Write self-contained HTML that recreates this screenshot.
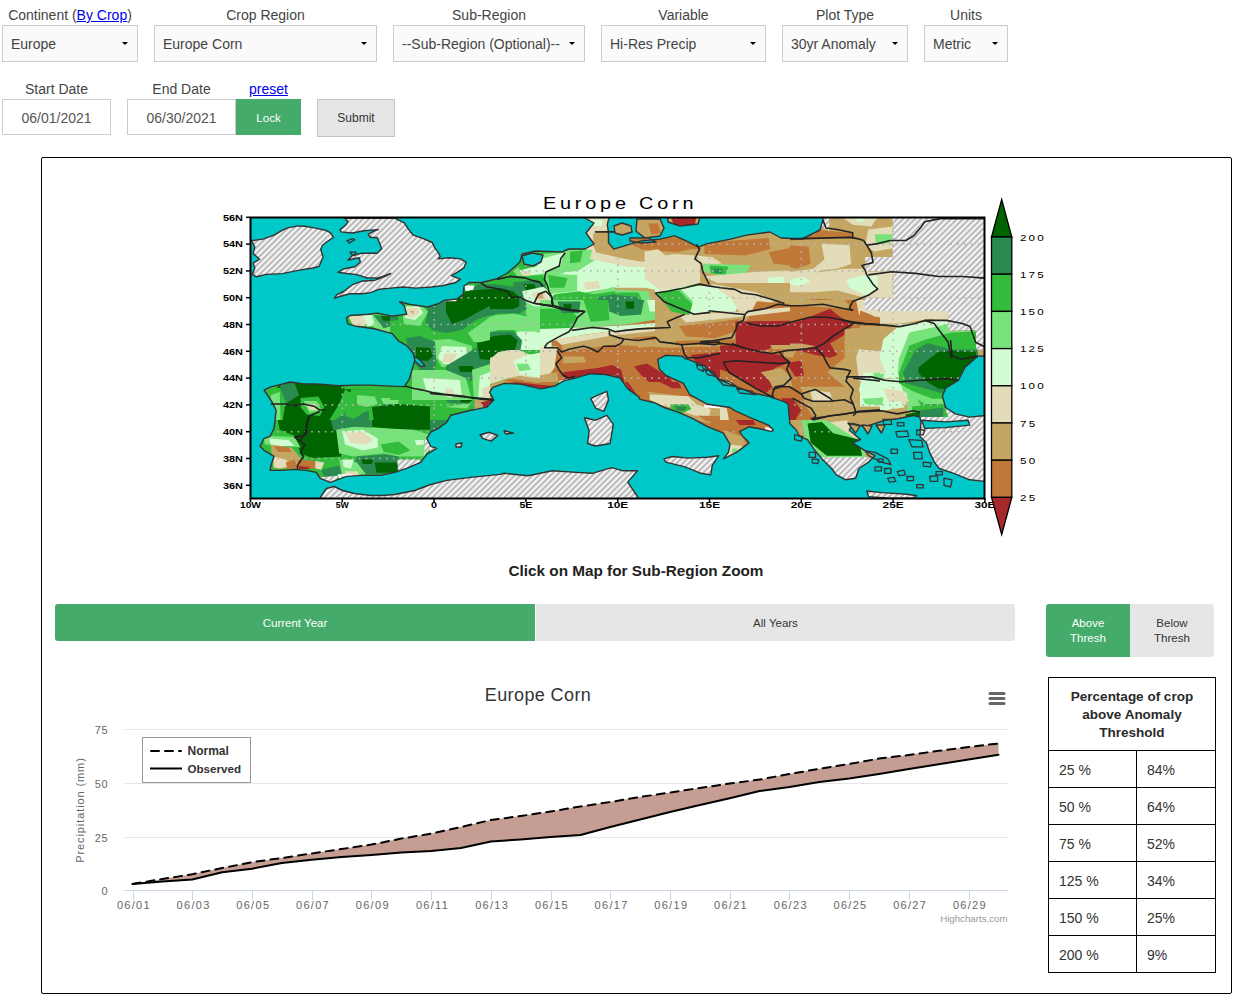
<!DOCTYPE html>
<html><head><meta charset="utf-8"><style>
html,body{margin:0;padding:0;background:#fff;}
body{width:1245px;height:1001px;position:relative;overflow:hidden;font-family:"Liberation Sans",sans-serif;color:#333;}
.a{position:absolute;}
.lbl{position:absolute;font-size:14px;line-height:16px;color:#444;text-align:center;white-space:nowrap;}
.sel{position:absolute;top:25px;height:35px;border:1px solid #ccc;background:#fafafa;}
.sel span{position:absolute;left:8px;top:10px;font-size:14px;line-height:16px;color:#444;white-space:nowrap;}
.car{position:absolute;top:16px;width:0;height:0;border-left:3px solid transparent;border-right:3px solid transparent;border-top:3px solid #000;}
.inp{position:absolute;top:99px;height:34px;border:1px solid #ccc;background:#fff;}
.inp span{position:absolute;left:0;right:0;top:10px;text-align:center;font-size:14px;line-height:16px;color:#555;}
a{color:#00e;text-decoration:underline;}
.btn{text-align:center;font-size:12px;}
.g{background:#44ab6a;color:#fff;}
.tab{text-align:center;font-size:11.5px;line-height:39px;}
.tab2{text-align:center;font-size:11.5px;line-height:15px;box-sizing:border-box;padding-top:12px;}
.td{font-size:14px;line-height:16px;color:#333;white-space:nowrap;}
</style></head><body>
<div class="lbl" style="left:-18px;width:176px;top:7px">Continent (<a>By Crop</a>)</div>
<div class="sel" style="left:2px;width:134px"><span>Europe</span><i class="car" style="left:119px"></i></div>
<div class="lbl" style="left:134px;width:263px;top:7px">Crop Region</div>
<div class="sel" style="left:154px;width:221px"><span>Europe Corn</span><i class="car" style="left:206px"></i></div>
<div class="lbl" style="left:373px;width:232px;top:7px">Sub-Region</div>
<div class="sel" style="left:393px;width:190px"><span>--Sub-Region (Optional)--</span><i class="car" style="left:175px"></i></div>
<div class="lbl" style="left:581px;width:205px;top:7px">Variable</div>
<div class="sel" style="left:601px;width:163px"><span>Hi-Res Precip</span><i class="car" style="left:148px"></i></div>
<div class="lbl" style="left:762px;width:166px;top:7px">Plot Type</div>
<div class="sel" style="left:782px;width:124px"><span>30yr Anomaly</span><i class="car" style="left:109px"></i></div>
<div class="lbl" style="left:904px;width:124px;top:7px">Units</div>
<div class="sel" style="left:924px;width:82px"><span>Metric</span><i class="car" style="left:67px"></i></div>
<div class="lbl" style="left:2px;width:109px;top:81px">Start Date</div>
<div class="lbl" style="left:127px;width:109px;top:81px">End Date</div>
<div class="lbl" style="left:236px;width:65px;top:81px"><a>preset</a></div>
<div class="inp" style="left:2px;width:107px"><span>06/01/2021</span></div>
<div class="inp" style="left:127px;width:107px"><span>06/30/2021</span></div>
<div class="a btn g" style="left:236px;top:99px;width:65px;height:36px;line-height:38px;font-size:11.5px">Lock</div>
<div class="a btn" style="left:317px;top:99px;width:76px;height:36px;line-height:36px;border:1px solid #c4c4c4;background:#e6e6e6;color:#333">Submit</div>
<div class="a" style="left:41px;top:157px;width:1189px;height:835px;border:1px solid #000;border-radius:2px"></div>
<div class="a" style="left:436px;width:400px;top:562px;text-align:center;font-size:15.3px;line-height:18px;font-weight:bold;color:#222">Click on Map for Sub-Region Zoom</div>
<div class="a tab g" style="left:55px;top:604px;width:480px;height:37px;border-radius:3px 0 0 3px">Current Year</div>
<div class="a tab" style="left:536px;top:604px;width:479px;height:37px;border-radius:0 3px 3px 0;background:#e6e6e6;color:#333">All Years</div>
<div class="a tab2 g" style="left:1046px;top:604px;width:84px;height:53px;border-radius:3px 0 0 3px">Above<br>Thresh</div>
<div class="a tab2" style="left:1130px;top:604px;width:84px;height:53px;border-radius:0 3px 3px 0;background:#e6e6e6;color:#333">Below<br>Thresh</div>
<div class="a" style="left:1048px;top:677px;width:166px;height:294px;border:1px solid #000"></div>
<div class="a" style="left:1049px;top:688px;width:166px;text-align:center;font-size:13.5px;line-height:18px;font-weight:bold;color:#2a2a2a">Percentage of crop<br>above Anomaly<br>Threshold</div>
<div class="a" style="left:1048px;top:750px;width:168px;height:1px;background:#000"></div>
<div class="a td" style="left:1059px;top:762px">25 %</div>
<div class="a td" style="left:1147px;top:762px">84%</div>
<div class="a" style="left:1048px;top:787px;width:168px;height:1px;background:#000"></div>
<div class="a td" style="left:1059px;top:799px">50 %</div>
<div class="a td" style="left:1147px;top:799px">64%</div>
<div class="a" style="left:1048px;top:824px;width:168px;height:1px;background:#000"></div>
<div class="a td" style="left:1059px;top:836px">75 %</div>
<div class="a td" style="left:1147px;top:836px">52%</div>
<div class="a" style="left:1048px;top:861px;width:168px;height:1px;background:#000"></div>
<div class="a td" style="left:1059px;top:873px">125 %</div>
<div class="a td" style="left:1147px;top:873px">34%</div>
<div class="a" style="left:1048px;top:898px;width:168px;height:1px;background:#000"></div>
<div class="a td" style="left:1059px;top:910px">150 %</div>
<div class="a td" style="left:1147px;top:910px">25%</div>
<div class="a" style="left:1048px;top:935px;width:168px;height:1px;background:#000"></div>
<div class="a td" style="left:1059px;top:947px">200 %</div>
<div class="a td" style="left:1147px;top:947px">9%</div>
<div class="a" style="left:1136px;top:750px;width:1px;height:222px;background:#000"></div>
<svg class="a" style="left:0;top:0" width="1245" height="560" viewBox="0 0 1245 560">
<defs><pattern id="hat" patternUnits="userSpaceOnUse" width="6" height="6"><rect width="6" height="6" fill="#f3f3f3"/><path d="M-1,7 L7,-1 M-4,4 L4,-4 M2,10 L10,2" stroke="#bbb" stroke-width="2"/></pattern>
<clipPath id="mc"><rect x="250" y="217" width="735" height="282"/></clipPath><clipPath id="rc0"><rect x="430" y="217" width="185" height="133"/></clipPath><clipPath id="rc1"><rect x="250" y="300" width="180" height="120"/></clipPath><clipPath id="rc2"><rect x="250" y="420" width="185" height="80"/></clipPath><clipPath id="rc3"><rect x="430" y="370" width="70" height="130"/></clipPath><clipPath id="rc4"><rect x="430" y="350" width="185" height="70"/></clipPath><clipPath id="rc5"><rect x="615" y="347" width="25" height="73"/></clipPath><clipPath id="rc6"><rect x="615" y="217" width="175" height="130"/></clipPath><clipPath id="rc7"><rect x="790" y="217" width="195" height="141"/></clipPath><clipPath id="rc8"><rect x="640" y="347" width="150" height="153"/></clipPath><clipPath id="rc9"><rect x="790" y="347" width="195" height="153"/></clipPath><clipPath id="rc10"><rect x="540" y="300" width="180" height="82"/></clipPath><clipPath id="rc11"><rect x="720" y="300" width="160" height="120"/></clipPath><clipPath id="rc12"><rect x="860" y="311" width="88" height="20"/></clipPath><clipPath id="rc13"><rect x="860" y="331" width="116" height="25"/></clipPath><clipPath id="rc14"><rect x="860" y="356" width="125" height="74"/></clipPath><clipPath id="rc15"><rect x="390" y="300" width="100" height="100"/></clipPath><clipPath id="rc16"><rect x="655" y="283" width="135" height="62"/></clipPath><clipPath id="rc17"><rect x="530" y="250" width="90" height="50"/></clipPath><clipPath id="rc18"><rect x="540" y="230" width="160" height="70"/></clipPath></defs>
<g clip-path="url(#mc)">
<rect x="250" y="217" width="735" height="282" fill="url(#hat)"/>
<clipPath id="ext"><polygon points="250,217 985,217 985,499 640,499 640,462 480,466 420,470 380,478 346,479 330,484 250,484"/></clipPath>
<g clip-path="url(#ext)">
<g clip-path="url(#rc0)">
<rect x="430" y="217" width="185" height="133" fill="#33bb3b"/>
<polygon points="578.6,217.0 615.0,217.0 615.0,252.7 586.0,249.7" fill="#e2dcb8" />
<polygon points="596.4,231.9 615.0,230.4 615.0,246.7 597.9,245.2" fill="#c5a562" />
<polygon points="590.5,220.0 602.4,220.0 602.4,225.9 592.0,225.9" fill="#d2fcd2" />
<polygon points="566.7,252.7 615.0,252.7 615.0,288.3 593.4,291.3 563.7,297.2 551.8,294.3 548.9,276.4 560.8,266.0" fill="#d2fcd2" />
<polygon points="592.0,246.7 615.0,245.2 615.0,261.6 594.9,260.1" fill="#e2dcb8" />
<polygon points="599.4,231.9 615.0,228.9 615.0,246.7 600.9,246.7" fill="#c5a562" />
<polygon points="583.0,282.4 597.9,280.9 600.9,288.3 586.0,289.8" fill="#e2dcb8" />
<polygon points="525.1,303.2 557.8,300.2 615.0,286.8 615.0,327.0 578.6,329.9 548.9,332.9 528.1,329.9" fill="#77e37a" />
<polygon points="554.8,294.3 578.6,291.3 593.4,294.3 615.0,291.3 615.0,321.0 593.4,324.0 572.6,321.0 554.8,312.1" fill="#33bb3b" />
<polygon points="596.4,297.2 615.0,294.3 615.0,309.1 600.9,306.2" fill="#2b8a50" />
<polygon points="560.8,300.2 577.1,300.2 578.6,312.1 566.7,316.6 560.8,309.1" fill="#2b8a50" />
<polygon points="563.7,304.7 571.2,304.7 571.2,309.1 565.2,309.1" fill="#006400" />
<polygon points="513.2,270.5 542.9,254.1 566.7,251.2 563.7,273.5 542.9,276.4 519.2,279.4" fill="#77e37a" />
<polygon points="519.2,258.6 534.0,255.6 537.0,267.5 519.2,270.5" fill="#33bb3b" />
<polygon points="519.2,270.5 537.0,266.0 542.9,258.6 563.7,252.7 560.8,266.0 542.9,273.5 525.1,276.4" fill="#d2fcd2" />
<polygon points="520.6,272.0 531.0,271.2 531.0,274.9 522.1,275.7" fill="#e2dcb8" />
<polygon points="480.5,280.9 513.2,276.4 542.9,274.9 548.9,282.4 525.1,297.2 501.3,294.3 483.5,288.3" fill="#33bb3b" />
<polygon points="430.0,309.1 437.4,300.2 464.2,288.3 480.5,283.9 493.9,283.9 513.2,286.8 525.1,294.3 526.6,309.1 519.2,313.6 496.9,313.6 474.6,321.0 459.7,328.4 444.9,331.4 430.0,329.9" fill="#2b8a50" />
<polygon points="437.4,304.7 456.7,300.2 465.7,291.3 480.5,289.8 501.3,288.3 513.2,291.3 519.2,297.2 519.2,306.2 513.2,309.1 492.4,309.1 480.5,312.1 467.1,321.0 456.7,324.0 444.9,321.0 438.9,312.1" fill="#006400" />
<polygon points="513.2,282.4 537.0,279.4 545.9,285.4 542.9,291.3 525.1,294.3 513.2,291.3" fill="#2b8a50" />
<polygon points="523.6,283.9 534.0,283.9 537.0,289.8 526.6,291.3" fill="#006400" />
<polygon points="522.1,291.3 542.9,286.8 553.3,294.3 551.8,306.2 534.0,306.2 525.1,301.7" fill="#d2fcd2" />
<polygon points="531.0,292.8 544.4,291.3 548.9,300.2 537.0,303.2" fill="#e2dcb8" />
<polygon points="537.0,293.5 542.9,293.5 542.9,298.7 538.5,298.7" fill="#c5a562" />
<polygon points="430.0,329.9 459.7,329.9 474.6,321.0 496.9,315.1 513.2,313.6 534.0,318.0 548.9,329.9 534.0,335.9 513.2,329.9 498.4,329.9 474.6,338.8 447.8,338.8 430.0,335.9" fill="#77e37a" />
<polygon points="516.2,331.4 534.0,331.4 551.8,335.9 554.8,350.7 542.9,358.0 522.1,358.0 519.2,347.8" fill="#d2fcd2" />
<polygon points="473.1,338.8 492.4,331.4 513.2,331.4 522.1,340.3 519.2,358.0 471.6,358.0" fill="#2b8a50" />
<polygon points="477.5,341.8 493.9,335.9 510.2,334.4 517.7,340.3 514.7,350.7 501.3,358.0 479.0,358.0 474.6,350.7" fill="#006400" />
<polygon points="438.9,341.8 467.1,340.3 470.1,358.0 438.9,358.0" fill="#77e37a" />
<polygon points="444.9,346.3 459.7,344.8 462.7,358.0 444.9,358.0" fill="#d2fcd2" />
<polygon points="548.9,344.8 563.7,343.3 560.8,358.0 545.9,358.0" fill="#e2dcb8" />
<polygon points="560.8,329.9 615.0,327.0 615.0,335.9 563.7,343.3 551.8,341.8" fill="#e2dcb8" />
<polygon points="560.8,338.8 615.0,335.9 615.0,346.3 563.7,350.7" fill="#c5a562" />
<polygon points="557.8,347.8 615.0,344.8 615.0,358.0 559.3,358.0" fill="#c07838" />
<polygon points="464.2,285.4 474.6,285.4 473.1,289.8 465.7,291.3" fill="#ffffff" />
<polygon points="435.9,301.7 456.7,300.2 455.3,304.7 437.4,306.2" fill="#ffffff" />
</g>
<g clip-path="url(#rc1)">
<rect x="250" y="300" width="180" height="120" fill="#33bb3b"/>
<polygon points="348.1,316.3 365.9,314.9 368.9,325.3 354.0,326.7" fill="#e2dcb8" />
<polygon points="371.8,313.4 383.7,316.3 398.6,329.7 383.7,334.2 373.3,326.7" fill="#77e37a" />
<polygon points="373.3,314.9 397.1,316.3 398.6,323.8 383.7,328.2" fill="#2b8a50" />
<polygon points="380.8,316.3 398.6,316.3 397.1,320.8 383.7,320.8" fill="#006400" />
<polygon points="362.9,314.9 371.8,314.9 374.8,325.3 367.4,326.7" fill="#d2fcd2" />
<polygon points="401.6,303.0 422.4,308.9 413.4,322.3 404.5,317.8" fill="#77e37a" />
<polygon points="404.5,304.5 422.4,307.4 423.8,313.4 410.5,319.3" fill="#d2fcd2" />
<polygon points="406.0,305.9 417.9,307.4 419.4,317.8 410.5,317.8" fill="#e2dcb8" />
<polygon points="406.0,338.6 428.3,334.2 435.0,344.6 435.0,359.4 420.9,359.4 410.5,349.0" fill="#2b8a50" />
<polygon points="413.4,347.5 432.8,347.5 432.8,359.4 416.4,360.9" fill="#006400" />
<polygon points="412.0,369.8 435.0,366.9 435.0,395.1 413.4,392.1" fill="#77e37a" />
<polygon points="414.9,375.8 435.0,372.8 435.0,392.1 422.4,389.2" fill="#d2fcd2" />
<polygon points="279.7,383.2 339.2,383.2 345.1,389.2 339.2,404.0 327.3,423.3 339.2,441.0 264.9,441.0 272.3,395.1" fill="#006400" />
<polygon points="345.1,389.2 435.0,390.6 435.0,395.1 354.0,395.1" fill="#006400" />
<polygon points="281.2,383.2 294.6,383.2 299.0,395.1 285.7,404.0 278.2,395.1" fill="#2b8a50" />
<polygon points="264.9,389.2 279.7,387.7 285.7,401.0 279.7,441.0 267.8,441.0 270.8,404.0" fill="#33bb3b" />
<polygon points="270.8,395.1 279.7,392.1 281.2,441.0 272.3,441.0" fill="#77e37a" />
<polygon points="300.5,398.1 318.4,396.6 324.3,407.0 319.8,415.9 306.5,414.4 300.5,407.0" fill="#33bb3b" />
<polygon points="303.5,401.0 316.9,401.0 321.3,410.0 309.4,412.9" fill="#77e37a" />
<polygon points="306.5,404.0 315.4,404.0 316.9,410.0 309.4,410.0" fill="#e2dcb8" />
<polygon points="330.2,423.3 345.1,412.9 357.0,401.0 362.9,389.2 383.7,389.2 398.6,389.2 435.0,392.1 435.0,404.0 398.6,407.0 368.9,404.0 368.9,418.9 354.0,429.3 333.2,429.3" fill="#2b8a50" />
<polygon points="351.0,389.2 398.6,389.2 435.0,395.1 435.0,407.0 383.7,404.0 362.9,412.9 354.0,418.9 345.1,415.9" fill="#33bb3b" />
<polygon points="357.0,395.1 374.8,396.6 377.8,404.0 365.9,407.0 357.0,404.0" fill="#77e37a" />
<polygon points="380.8,398.1 398.6,398.1 398.6,404.0 383.7,404.0" fill="#77e37a" />
<polygon points="371.8,407.0 398.6,404.0 435.0,407.0 435.0,427.8 398.6,429.3 374.8,427.8" fill="#006400" />
<polygon points="339.2,429.3 368.9,427.8 435.0,430.8 435.0,441.0 339.2,441.0" fill="#33bb3b" />
<polygon points="346.6,432.2 383.7,430.8 398.6,441.0 345.1,441.0" fill="#77e37a" />
<polygon points="346.6,433.7 365.9,433.7 368.9,441.0 345.1,441.0" fill="#e2dcb8" />
</g>
<g clip-path="url(#rc2)">
<rect x="250" y="420" width="185" height="80" fill="#33bb3b"/>
<polygon points="279.7,405.9 306.5,403.0 333.2,411.9 342.1,420.8 336.2,429.7 339.2,438.6 342.1,456.5 312.4,457.9 300.5,453.5 294.6,435.7 279.7,429.7 276.7,414.9" fill="#006400" />
<polygon points="371.8,408.9 398.6,405.9 435.0,408.9 435.0,429.7 398.6,429.7 371.8,426.7" fill="#006400" />
<polygon points="357.0,456.5 398.6,453.5 398.6,474.3 365.9,474.3 354.0,465.4" fill="#2b8a50" />
<polygon points="374.8,462.4 397.1,462.4 397.1,472.8 376.3,472.8" fill="#006400" />
<polygon points="361.4,459.4 373.3,459.4 371.8,463.9 362.9,463.9" fill="#006400" />
<polygon points="330.2,417.8 354.0,411.9 368.9,408.9 371.8,429.7 354.0,429.7 342.1,432.7 333.2,429.7" fill="#2b8a50" />
<polygon points="321.3,469.8 339.2,465.4 342.1,474.3 324.3,477.3" fill="#2b8a50" />
<polygon points="336.2,429.7 354.0,426.7 383.7,428.2 413.4,429.7 428.3,434.2 425.3,456.5 398.6,456.5 383.7,453.5 354.0,456.5 339.2,453.5" fill="#77e37a" />
<polygon points="380.8,444.6 398.6,441.6 410.5,450.5 398.6,455.0 383.7,452.0" fill="#33bb3b" />
<polygon points="342.1,431.2 362.9,429.7 377.8,438.6 377.8,447.5 362.9,450.5 345.1,444.6" fill="#d2fcd2" />
<polygon points="345.1,432.7 362.9,431.9 373.3,440.1 365.9,444.6 351.0,443.1" fill="#e2dcb8" />
<polygon points="410.5,438.6 425.3,435.7 425.3,447.5 413.4,449.0" fill="#77e37a" />
<polygon points="414.9,440.1 423.8,440.1 423.8,444.6 416.4,445.3" fill="#d2fcd2" />
<polygon points="263.4,435.7 294.6,437.1 300.5,447.5 273.8,444.6 264.9,444.6" fill="#77e37a" />
<polygon points="269.3,438.6 288.6,440.1 294.6,446.1 270.8,446.1" fill="#d2fcd2" />
<polygon points="270.8,444.6 291.6,447.5 302.0,459.4 299.0,468.4 273.8,468.4 272.3,459.4" fill="#c5a562" />
<polygon points="273.8,456.5 285.7,459.4 291.6,465.4 279.7,468.4 273.8,466.9" fill="#e2dcb8" />
<polygon points="273.8,446.1 288.6,447.5 291.6,452.0 278.2,452.0" fill="#c07838" />
<polygon points="285.7,462.4 294.6,459.4 297.5,468.4 287.1,468.4" fill="#c07838" />
<polygon points="297.5,459.4 315.4,460.9 318.4,468.4 297.5,468.4" fill="#c07838" />
<polygon points="299.0,466.1 309.4,466.9 309.4,469.1 299.0,469.1" fill="#a6282b" />
<polygon points="315.4,460.9 324.3,462.4 321.3,469.8 315.4,468.4" fill="#e2dcb8" />
<polygon points="339.2,459.4 357.0,462.4 365.9,474.3 342.1,475.8" fill="#77e37a" />
<polygon points="342.1,459.4 354.0,459.4 351.0,468.4 343.6,466.9" fill="#d2fcd2" />
<polygon points="345.1,471.3 357.0,471.3 360.0,475.8 345.1,476.5" fill="#e2dcb8" />
<polygon points="337.7,474.3 352.5,474.3 351.0,477.3 339.2,478.8" fill="#ffffff" />
<polygon points="397.1,459.4 419.4,459.4 420.9,462.4 398.6,471.3" fill="url(#hat)" />
<polygon points="319.8,477.3 339.2,475.8 333.2,483.2 324.3,483.2" fill="url(#hat)" />
<polygon points="425.3,438.6 432.8,444.6 429.8,449.0 423.8,455.0" fill="url(#hat)" />
</g>
<g clip-path="url(#rc3)">
<rect x="430" y="370" width="70" height="130" fill="#33bb3b"/>
<polygon points="410.6,370.0 500.0,370.0 500.0,390.1 470.9,394.1 450.8,406.1 430.7,402.1" fill="#77e37a" />
<polygon points="426.7,378.0 470.9,378.0 470.9,392.1 438.8,392.1" fill="#d2fcd2" />
<polygon points="416.7,388.1 438.8,390.1 440.8,402.1 426.7,404.1 414.7,398.1" fill="#006400" />
<polygon points="430.7,410.2 448.8,414.2 446.8,426.2 434.7,428.2" fill="#006400" />
<polygon points="422.7,406.1 450.8,410.2 450.8,430.2 430.7,434.3" fill="#2b8a50" />
<polygon points="458.8,392.1 494.0,390.1 494.0,404.1 470.9,414.2 458.8,410.2" fill="#e2dcb8" />
<polygon points="462.9,396.1 494.0,394.1 489.0,408.2 470.9,412.2" fill="#c5a562" />
<polygon points="470.9,398.1 494.0,397.1 489.0,408.2 472.9,410.2" fill="#c07838" />
<polygon points="482.9,399.1 494.0,398.1 491.0,407.1 484.9,408.2" fill="#a6282b" />
<polygon points="434.7,392.1 470.9,396.1 466.9,414.2 438.8,416.2" fill="#77e37a" />
<polygon points="414.7,392.1 438.8,396.1 434.7,404.1 414.7,402.1" fill="#006400" />
<polygon points="450.8,410.2 494.0,396.1 494.0,410.2 470.9,420.2 450.8,420.2" fill="#e2dcb8" />
<polygon points="462.9,408.2 491.0,398.1 489.0,412.2 466.9,418.2" fill="#c5a562" />
<polygon points="474.9,406.1 493.0,400.1 491.0,408.2 476.9,414.2" fill="#c07838" />
<polygon points="482.9,402.1 494.0,401.1 491.0,408.2 484.9,409.2" fill="#a6282b" />
<polygon points="450.8,417.2 470.9,415.2 468.9,420.2 450.8,421.2" fill="#ffffff" />
<polygon points="396.6,458.4 420.7,458.4 422.7,474.4 396.6,474.4" fill="url(#hat)" />
<polygon points="424.7,436.3 436.7,436.3 436.7,454.3 424.7,456.3" fill="url(#hat)" />
</g>
<g clip-path="url(#rc4)">
<rect x="430" y="350" width="185" height="70" fill="#33bb3b"/>
<polygon points="430.0,340.0 534.0,340.0 534.0,345.9 522.1,351.9 498.4,362.3 486.5,378.6 471.6,383.1 449.3,384.6 430.0,384.6" fill="#77e37a" />
<polygon points="430.0,354.9 444.9,353.4 447.8,377.1 474.6,375.7 489.4,360.8 504.3,354.9 519.2,345.9 522.1,340.0 534.0,340.0 534.0,345.9 522.1,351.9 498.4,362.3 486.5,378.6 471.6,383.1 449.3,384.6 430.0,384.6" fill="#2b8a50" />
<polygon points="430.0,359.3 443.4,357.8 444.9,378.6 430.0,380.1" fill="#33bb3b" />
<polygon points="434.5,345.9 468.6,344.5 477.5,354.9 459.7,368.2 435.9,365.3" fill="#77e37a" />
<polygon points="438.9,348.9 462.7,348.9 468.6,356.3 456.7,363.8 441.9,360.8" fill="#d2fcd2" />
<polygon points="446.3,353.4 456.7,353.4 452.3,360.8 446.3,359.3" fill="#e2dcb8" />
<polygon points="479.0,348.9 492.4,343.0 516.2,340.0 514.7,347.4 495.4,356.3 483.5,359.3" fill="#006400" />
<polygon points="459.7,366.7 471.6,366.7 470.1,371.2 462.7,371.2" fill="#006400" />
<polygon points="486.5,362.3 498.4,351.9 516.2,348.9 531.0,354.9 542.9,363.8 542.9,374.2 551.8,381.6 522.1,378.6 507.3,378.6 493.9,383.1 480.5,387.5" fill="#e2dcb8" />
<polygon points="513.2,360.8 528.1,354.9 542.9,351.9 557.8,340.0 557.8,348.9 548.9,362.3 548.9,375.7 537.0,377.1 519.2,374.2" fill="#d2fcd2" />
<polygon points="516.2,363.8 528.1,363.8 531.0,369.7 519.2,371.2" fill="#77e37a" />
<polygon points="480.5,387.5 495.4,383.1 507.3,378.6 519.2,375.7 540.0,378.6 554.8,377.1 554.8,384.6 534.0,384.6 513.2,383.1 489.4,390.5 479.0,402.4" fill="#c5a562" />
<polygon points="504.3,380.1 513.2,378.6 537.0,383.1 556.3,380.1 554.8,386.1 542.9,387.5 513.2,384.6" fill="#c07838" />
<polygon points="511.7,381.6 537.0,384.6 553.3,386.1 542.9,388.3 519.2,385.3" fill="#a6282b" />
<polygon points="560.8,340.0 615.0,340.0 615.0,343.0 563.7,345.9" fill="#e2dcb8" />
<polygon points="557.8,345.9 578.6,343.0 615.0,340.0 615.0,348.9 563.7,354.9" fill="#c5a562" />
<polygon points="545.9,365.3 560.8,353.4 615.0,348.9 615.0,369.7 578.6,377.1 557.8,377.1 551.8,374.2" fill="#c07838" />
<polygon points="559.3,356.3 578.6,354.9 593.4,360.8 572.6,365.3 560.8,363.8" fill="#c5a562" />
<polygon points="542.9,366.7 557.8,357.8 560.8,377.1 548.9,375.7" fill="#c5a562" />
<polygon points="563.7,374.2 593.4,369.7 615.0,363.8 615.0,375.7 590.5,374.2 575.6,378.6" fill="#a6282b" />
<polygon points="557.8,381.6 572.6,377.1 575.6,378.6 560.8,384.6" fill="#ffffff" />
<polygon points="430.0,384.6 449.3,384.6 471.6,384.6 480.5,389.0 467.1,408.4 444.9,406.9 430.0,402.4" fill="#77e37a" />
<polygon points="433.0,380.1 449.3,384.6 450.8,389.0 434.5,387.5" fill="#d2fcd2" />
<polygon points="430.0,389.0 444.9,392.0 462.7,396.5 462.7,403.9 444.9,406.9 430.0,406.9" fill="#33bb3b" />
<polygon points="444.9,396.5 474.6,397.9 468.6,403.9 447.8,402.4" fill="#2b8a50" />
<polygon points="459.7,397.9 473.1,399.4 470.1,402.4 461.2,402.4" fill="#006400" />
<polygon points="474.6,399.4 492.4,396.5 493.9,402.4 474.6,409.8" fill="#c5a562" />
<polygon points="480.5,402.4 492.4,399.4 492.4,405.4 483.5,406.9" fill="#a6282b" />
<polygon points="474.6,408.4 486.5,406.9 477.5,411.3" fill="#ffffff" />
</g>
<g clip-path="url(#rc5)">
<rect x="615" y="347" width="25" height="73" fill="#c07838"/>
<polygon points="595.0,320.0 662.5,320.0 662.5,323.9 623.9,325.8 595.0,325.8" fill="#77e37a" />
<polygon points="595.0,325.8 633.6,323.9 662.5,323.9 672.1,320.0 691.4,320.0 691.4,321.9 662.5,327.7 623.9,329.6 595.0,330.6" fill="#d2fcd2" />
<polygon points="595.0,331.6 609.5,331.6 611.4,341.2 595.0,345.1" fill="#e2dcb8" />
<polygon points="609.5,331.6 657.7,329.6 674.0,329.6 676.9,341.2 652.8,345.1 650.9,348.9 639.3,348.9 633.6,343.1 623.9,343.1 609.5,344.1" fill="#c5a562" />
<polygon points="595.0,371.1 611.4,365.3 622.0,374.0 637.4,395.2 631.6,393.3 622.0,377.8 611.4,374.9 595.0,374.0" fill="#a6282b" />
<polygon points="633.6,368.2 640.3,364.3 652.8,371.1 660.5,377.8 674.0,381.7 674.0,387.5 662.5,388.4 652.8,381.7 641.3,374.0" fill="#a6282b" />
</g>
<g clip-path="url(#rc6)">
<rect x="615" y="217" width="175" height="130" fill="#c5a562"/>
<polygon points="600.0,233.1 648.2,241.1 680.3,236.3 696.4,244.3 690.0,255.6 664.3,252.3 645.0,260.4 600.0,255.6" fill="#c5a562" />
<polygon points="628.9,244.3 680.3,237.9 696.4,247.5 677.1,252.3 632.1,249.1" fill="#c07838" />
<polygon points="600.0,252.3 645.0,250.7 648.2,258.8 673.9,253.9 696.4,255.6 696.4,263.6 664.3,265.2 645.0,266.8 600.0,265.2" fill="#e2dcb8" />
<polygon points="600.0,258.8 648.2,265.2 667.5,265.2 683.5,268.4 696.4,278.0 680.3,287.7 661.0,290.9 645.0,287.7 600.0,287.7" fill="#d2fcd2" />
<polygon points="641.8,252.3 657.8,249.1 667.5,257.2 648.2,260.4" fill="#e2dcb8" />
<polygon points="664.3,278.0 690.0,276.4 693.2,284.5 677.1,290.9 664.3,289.3" fill="#77e37a" />
<polygon points="677.1,278.0 690.0,278.0 690.0,282.9 680.3,284.5" fill="#33bb3b" />
<polygon points="600.0,289.3 648.2,290.9 653.0,307.0 641.8,319.8 600.0,326.2" fill="#77e37a" />
<polygon points="600.0,292.5 638.6,292.5 645.0,307.0 635.3,316.6 600.0,319.8" fill="#33bb3b" />
<polygon points="606.4,294.1 638.6,297.3 641.8,310.2 628.9,315.0 609.6,311.8" fill="#2b8a50" />
<polygon points="625.7,300.5 633.7,300.5 633.7,308.6 627.3,308.6" fill="#006400" />
<polygon points="600.0,308.6 609.6,310.2 609.6,316.6 600.0,316.6" fill="#2b8a50" />
<polygon points="683.5,290.9 712.4,289.3 722.1,307.0 712.4,313.4 690.0,313.4" fill="#d2fcd2" />
<polygon points="661.0,290.9 690.0,287.7 696.4,300.5 696.4,313.4 680.3,316.6 664.3,307.0" fill="#77e37a" />
<polygon points="664.3,297.3 677.1,294.1 680.3,307.0 667.5,310.2" fill="#33bb3b" />
<polygon points="712.4,284.5 744.6,287.7 760.6,303.7 744.6,313.4 712.4,313.4" fill="#e2dcb8" />
<polygon points="696.4,249.1 800.0,249.1 800.0,265.2 760.6,268.4 728.5,265.2 712.4,258.8" fill="#c5a562" />
<polygon points="704.4,242.7 768.7,237.9 770.3,249.1 744.6,255.6 704.4,253.9" fill="#c07838" />
<polygon points="768.7,252.3 800.0,245.9 800.0,266.8 773.5,263.6" fill="#c07838" />
<polygon points="696.4,255.6 712.4,257.2 722.1,263.6 702.8,265.2" fill="#e2dcb8" />
<polygon points="702.8,263.6 751.0,265.2 744.6,274.8 722.1,276.4 702.8,271.6" fill="#77e37a" />
<polygon points="709.2,265.2 728.5,266.8 725.3,274.8 710.8,273.2" fill="#33bb3b" />
<polygon points="712.4,268.4 722.1,268.4 722.1,273.2 714.1,273.2" fill="#2b8a50" />
<polygon points="702.8,276.4 760.6,271.6 800.0,270.0 800.0,286.1 760.6,287.7 728.5,287.7" fill="#e2dcb8" />
<polygon points="767.1,278.0 783.1,276.4 784.7,282.9 768.7,284.5" fill="#d2fcd2" />
<polygon points="789.6,278.0 800.0,276.4 800.0,284.5 791.2,284.5" fill="#d2fcd2" />
<polygon points="600.0,326.2 624.1,329.4 616.1,339.1 600.0,340.7" fill="#d2fcd2" />
<polygon points="600.0,327.8 680.3,319.8 744.6,316.6 800.0,307.0 800.0,323.0 744.6,326.2 680.3,332.7 600.0,339.1" fill="#c5a562" />
<polygon points="664.3,319.8 738.2,313.4 744.6,329.4 712.4,339.1 673.9,339.1" fill="#c07838" />
<polygon points="744.6,300.5 800.0,300.5 800.0,313.4 747.8,316.6" fill="#c07838" />
<polygon points="736.5,319.8 800.0,316.6 800.0,347.0 738.2,347.0 734.9,332.7" fill="#a6282b" />
<polygon points="600.0,339.1 673.9,339.1 696.4,347.0 600.0,347.0" fill="#c5a562" />
<polygon points="664.3,334.3 734.9,329.4 738.2,347.0 680.3,347.0" fill="#c07838" />
<polygon points="670.7,217.0 696.4,217.0 694.8,225.0 673.9,225.0" fill="#a6282b" />
<polygon points="638.6,220.2 648.2,218.6 653.0,229.9 641.8,231.5" fill="#c5a562" />
<polygon points="648.2,223.4 657.8,223.4 661.0,233.1 651.4,234.7" fill="#c07838" />
</g>
<g clip-path="url(#rc7)">
<rect x="790" y="217" width="195" height="141" fill="#c5a562"/>
<polygon points="892.6,217.0 985.0,217.0 985.0,358.0 975.6,358.0 975.6,330.5 948.2,330.5 948.2,311.0 865.2,311.0 865.2,297.7 892.6,297.7 892.6,271.0 865.2,271.0 865.2,256.9 892.6,256.9" fill="url(#hat)" />
<polygon points="821.3,217.0 829.2,217.0 829.2,231.1 821.3,226.4" fill="url(#hat)" />
<polygon points="841.7,217.0 877.7,217.0 871.4,226.4 852.6,224.8" fill="#e2dcb8" />
<polygon points="855.8,218.6 865.2,218.6 863.6,221.7 857.3,221.7" fill="#d2fcd2" />
<polygon points="790.0,232.7 811.9,229.5 849.5,232.7 855.8,237.4 837.0,237.4 790.0,240.5" fill="#c07838" />
<polygon points="868.3,229.5 892.6,226.4 892.6,248.3 874.6,251.5 865.2,245.2" fill="#e2dcb8" />
<polygon points="874.6,234.2 892.6,234.2 890.2,243.6 876.1,243.6" fill="#77e37a" />
<polygon points="790.0,245.2 808.8,246.8 810.4,264.0 796.3,268.7 790.0,267.1" fill="#c07838" />
<polygon points="821.3,243.6 849.5,245.2 851.1,264.0 837.0,268.7 821.3,270.2 796.3,282.8 790.0,282.8 790.0,271.8 813.5,268.7 824.5,259.3" fill="#e2dcb8" />
<polygon points="790.0,276.5 821.3,271.8 843.2,268.7 865.2,268.7 877.7,279.6 884.0,290.6 892.6,292.2 892.6,297.7 865.2,297.7 837.0,290.6 813.5,292.2 790.0,292.2" fill="#e2dcb8" />
<polygon points="790.0,279.6 802.5,276.5 810.4,281.2 799.4,285.9 790.0,284.3" fill="#d2fcd2" />
<polygon points="865.2,271.8 892.6,271.0 892.6,297.7 877.7,295.3" fill="#e2dcb8" />
<polygon points="846.4,279.6 863.6,274.9 877.7,276.5 877.7,289.0 865.2,295.3 849.5,287.5" fill="#d2fcd2" />
<polygon points="790.0,301.6 821.3,298.4 852.6,301.6 858.9,311.0 849.5,320.4 805.7,318.8 790.0,318.8" fill="#c07838" />
<polygon points="790.0,320.4 805.7,317.2 827.6,307.8 837.0,311.0 841.7,323.5 852.6,326.6 837.0,336.0 821.3,348.6 805.7,351.7 790.0,351.7" fill="#a6282b" />
<polygon points="829.2,326.6 855.8,325.1 868.3,326.6 852.6,336.0 837.0,342.3 821.3,353.3 805.7,358.0 790.0,358.0 790.0,351.7 805.7,351.7 821.3,348.6 837.0,336.0" fill="#c07838" />
<polygon points="805.7,350.1 829.2,348.6 833.9,358.0 808.8,358.0" fill="#a6282b" />
<polygon points="865.2,311.0 948.2,311.0 948.2,323.5 931.0,318.8 899.6,323.5 877.7,323.5" fill="#e2dcb8" />
<polygon points="880.8,326.6 909.0,325.1 915.3,336.0 899.6,358.0 877.7,358.0" fill="#e2dcb8" />
<polygon points="890.2,325.1 927.8,321.9 946.6,326.6 948.2,334.5 931.0,342.3 909.0,358.0 890.2,358.0 884.0,342.3" fill="#d2fcd2" />
<polygon points="909.0,329.8 931.0,326.6 946.6,332.9 948.2,358.0 915.3,358.0 909.0,345.4" fill="#77e37a" />
<polygon points="943.5,331.3 975.6,330.5 975.6,358.0 931.0,358.0 940.4,345.4" fill="#33bb3b" />
<polygon points="918.4,343.9 927.8,343.9 931.0,354.8 920.0,354.8" fill="#2b8a50" />
<polygon points="967.0,339.2 975.6,337.6 975.6,351.7 968.5,353.3" fill="#2b8a50" />
<polygon points="931.0,353.3 962.3,351.7 975.6,358.0 931.0,358.0" fill="#006400" />
<polygon points="801.0,231.9 815.1,231.9 815.1,234.2 801.0,234.2" fill="#ffffff" />
</g>
<g clip-path="url(#rc8)">
<rect x="640" y="347" width="150" height="153" fill="#c07838"/>
<polygon points="640.0,340.0 672.1,340.0 681.8,349.6 665.7,352.9 640.0,349.6" fill="#c5a562" />
<polygon points="640.0,365.7 659.3,367.3 675.3,376.9 681.8,388.2 672.1,388.2 656.1,380.2 640.0,378.6" fill="#a6282b" />
<polygon points="646.4,391.4 707.5,399.4 726.7,409.1 723.5,423.5 707.5,423.5 685.0,417.1" fill="#c5a562" />
<polygon points="649.6,394.6 688.2,396.2 696.2,404.3 710.7,409.1 709.1,417.1 694.6,415.5 675.3,409.1 657.7,404.3 649.6,399.4" fill="#e2dcb8" />
<polygon points="670.5,404.3 688.2,404.3 691.4,409.1 680.2,413.9 670.5,410.7" fill="#33bb3b" />
<polygon points="675.3,405.9 686.6,406.7 685.0,410.7 676.9,410.7" fill="#2b8a50" />
<polygon points="697.8,415.5 739.6,417.1 742.8,430.0 730.0,439.6 720.3,430.0" fill="#c07838" />
<polygon points="734.8,418.7 752.4,418.7 755.7,425.1 739.6,425.1" fill="#a6282b" />
<polygon points="723.5,430.0 742.8,436.4 746.0,444.4 733.2,449.2 723.5,442.8" fill="#c5a562" />
<polygon points="730.0,444.4 742.8,446.0 736.4,458.9 725.1,457.3" fill="#e2dcb8" />
<polygon points="732.4,448.4 737.2,448.4 737.2,453.3 732.4,453.3" fill="#77e37a" />
<polygon points="704.3,404.3 730.0,405.9 730.0,409.1 704.3,407.5" fill="#ffffff" />
<polygon points="765.3,426.7 773.3,428.4 771.7,433.2 765.3,431.6" fill="#ffffff" />
<polygon points="704.3,340.0 816.7,340.0 816.7,349.6 776.5,352.9 784.6,364.1 776.5,394.6 768.5,397.8 752.4,394.6 730.0,385.0 704.3,365.7 688.2,362.5 685.0,349.6" fill="#a6282b" />
<polygon points="676.9,340.0 704.3,340.0 685.0,360.9 676.9,359.3" fill="#c07838" />
<polygon points="678.6,340.0 704.3,343.2 709.1,352.9 685.0,354.5" fill="#c5a562" />
<polygon points="760.5,372.1 784.6,359.3 794.2,346.4 840.0,349.6 840.0,388.2 800.6,401.0 781.4,393.0 771.7,388.2" fill="#c07838" />
<polygon points="762.1,372.1 784.6,372.1 787.8,388.2 771.7,388.2" fill="#c5a562" />
<polygon points="800.6,368.9 840.0,368.9 840.0,388.2 816.7,394.6" fill="#c5a562" />
<polygon points="791.0,354.5 800.6,349.6 840.0,349.6 840.0,359.3 808.7,356.1 800.6,372.1 792.6,368.9" fill="#a6282b" />
<polygon points="792.6,401.0 800.6,401.0 800.6,423.5 794.2,430.0 789.4,420.3" fill="#a6282b" />
<polygon points="683.4,357.7 691.4,357.7 689.8,365.7 685.0,364.1" fill="url(#hat)" />
</g>
<g clip-path="url(#rc9)">
<rect x="790" y="347" width="195" height="153" fill="#c5a562"/>
<polygon points="785.0,340.0 846.0,340.0 852.5,372.1 839.6,378.6 830.0,388.2 785.0,385.0" fill="#c07838" />
<polygon points="785.0,340.0 830.0,340.0 817.1,349.6 801.1,346.4 785.0,349.6" fill="#a6282b" />
<polygon points="804.3,349.6 836.4,349.6 833.2,359.3 809.1,357.7" fill="#a6282b" />
<polygon points="789.8,359.3 804.3,359.3 805.9,378.6 791.4,378.6" fill="#a6282b" />
<polygon points="826.8,340.0 849.3,340.0 858.9,356.1 852.5,372.1 842.8,381.8 820.3,388.2 813.9,381.8" fill="#c5a562" />
<polygon points="849.3,340.0 891.0,340.0 910.3,356.1 897.4,368.9 881.4,372.1 862.1,372.1 855.7,356.1" fill="#e2dcb8" />
<polygon points="855.7,372.1 887.8,368.9 897.4,378.6 881.4,378.6 855.7,380.2" fill="#d2fcd2" />
<polygon points="873.4,373.7 884.6,373.7 881.4,380.2 875.0,380.2" fill="#77e37a" />
<polygon points="907.1,340.0 945.6,340.0 945.6,372.1 907.1,375.3 897.4,365.7" fill="#77e37a" />
<polygon points="916.7,340.0 950.5,340.0 950.5,359.3 929.6,372.1 916.7,368.9" fill="#33bb3b" />
<polygon points="903.9,372.1 926.4,362.5 961.7,356.1 958.5,381.8 929.6,385.0 903.9,381.8" fill="#2b8a50" />
<polygon points="919.9,362.5 945.6,352.9 964.9,356.1 964.9,376.9 953.7,381.8 929.6,375.3" fill="#006400" />
<polygon points="950.5,340.0 977.8,340.0 977.8,356.1 950.5,359.3" fill="#33bb3b" />
<polygon points="961.7,346.4 977.8,343.2 977.8,356.1 961.7,356.1" fill="#2b8a50" />
<polygon points="846.0,381.8 897.4,378.6 910.3,388.2 903.9,407.5 881.4,410.7 849.3,407.5" fill="#d2fcd2" />
<polygon points="881.4,388.2 903.9,391.4 907.1,404.3 887.8,404.3" fill="#e2dcb8" />
<polygon points="862.1,397.8 884.6,399.4 881.4,405.9 862.1,404.3" fill="#77e37a" />
<polygon points="907.1,388.2 939.2,388.2 945.6,410.7 923.2,417.1 907.1,410.7" fill="#77e37a" />
<polygon points="916.7,397.8 945.6,388.2 947.2,415.5 926.4,417.1" fill="#33bb3b" />
<polygon points="929.6,404.3 945.6,404.3 945.6,415.5 932.8,413.9" fill="#2b8a50" />
<polygon points="804.3,391.4 855.7,401.0 865.3,413.9 849.3,423.5 826.8,430.0 809.1,417.1" fill="#c5a562" />
<polygon points="809.1,401.0 833.2,397.8 833.2,410.7 813.9,413.9" fill="#c07838" />
<polygon points="820.3,423.5 846.0,420.3 862.1,430.0 858.9,439.6 833.2,436.4" fill="#e2dcb8" />
<polygon points="801.1,417.1 821.9,417.1 852.5,436.4 865.3,452.4 865.3,458.9 825.2,458.9 805.9,442.8" fill="#77e37a" />
<polygon points="807.5,423.5 821.9,421.9 833.2,433.2 858.9,439.6 862.1,455.7 826.8,455.7 810.7,442.8" fill="#006400" />
<polygon points="903.9,413.9 919.9,415.5 919.9,423.5 907.1,420.3" fill="#77e37a" />
<polygon points="905.5,415.5 918.3,417.1 916.7,421.9 907.1,420.3" fill="#006400" />
<polygon points="945.6,386.6 985.0,386.6 985.0,500.6 919.9,500.6 919.9,417.1 945.6,417.1" fill="url(#hat)" />
<polygon points="817.1,457.3 875.0,457.3 875.0,500.6 817.1,500.6" fill="url(#hat)" />
<polygon points="976.2,340.0 985.0,340.0 985.0,349.6 976.2,349.6" fill="url(#hat)" />
</g>
<g clip-path="url(#rc10)">
<rect x="540" y="300" width="180" height="82" fill="#c07838"/>
<polygon points="540.0,300.0 720.0,300.0 720.0,302.9 684.6,308.7 670.1,317.3 626.7,324.6 583.4,327.5 540.0,330.4" fill="#77e37a" />
<polygon points="540.0,308.7 568.9,308.7 577.6,317.3 568.9,328.9 540.0,328.9" fill="#33bb3b" />
<polygon points="557.3,301.4 580.5,301.4 579.0,313.0 561.7,313.0" fill="#2b8a50" />
<polygon points="563.1,304.3 571.8,304.3 570.4,310.1 564.6,310.1" fill="#006400" />
<polygon points="583.4,300.0 607.9,300.0 609.4,320.2 590.6,321.7" fill="#33bb3b" />
<polygon points="607.9,300.0 644.1,300.0 641.2,314.5 621.0,315.9 609.4,311.6" fill="#2b8a50" />
<polygon points="625.3,301.4 634.0,301.4 634.0,308.7 626.7,308.7" fill="#006400" />
<polygon points="647.0,300.0 661.4,300.0 661.4,311.6 649.9,311.6" fill="#d2fcd2" />
<polygon points="664.3,305.8 684.6,305.8 684.6,315.9 667.2,315.9" fill="#33bb3b" />
<polygon points="662.9,302.9 720.0,300.0 720.0,315.9 670.1,323.1 655.7,318.8" fill="#d2fcd2" />
<polygon points="540.0,328.9 583.4,327.5 626.7,325.3 670.1,321.7 720.0,313.7 720.0,316.6 670.1,325.3 626.7,329.6 583.4,334.7 540.0,343.4" fill="#d2fcd2" />
<polygon points="540.0,336.1 551.6,339.0 551.6,365.1 540.0,372.3" fill="#d2fcd2" />
<polygon points="554.5,339.0 612.3,331.1 670.1,326.0 720.0,315.9 720.0,320.2 670.1,330.4 612.3,336.1 563.1,346.3" fill="#e2dcb8" />
<polygon points="540.0,347.7 557.3,346.3 554.5,367.9 548.7,375.2 540.0,375.2" fill="#e2dcb8" />
<polygon points="561.7,344.8 612.3,335.4 670.1,329.6 720.0,319.5 720.0,346.3 670.1,347.7 612.3,344.8 563.1,352.0" fill="#c5a562" />
<polygon points="632.5,337.6 670.1,334.7 720.0,328.9 720.0,341.9 670.1,343.4 641.2,343.4" fill="#c07838" />
<polygon points="563.1,356.4 583.4,356.4 586.3,362.2 563.1,363.6" fill="#c5a562" />
<polygon points="632.5,339.0 655.7,340.5 652.8,346.3 638.3,347.7" fill="#c5a562" />
<polygon points="540.0,375.2 557.3,372.3 558.8,389.9 540.0,389.9" fill="#c5a562" />
<polygon points="563.1,372.3 597.8,367.9 612.3,365.1 621.0,369.4 626.7,389.9 615.2,375.2 583.4,375.2 563.1,381.0" fill="#a6282b" />
<polygon points="634.0,366.5 647.0,363.6 670.1,378.1 675.9,389.9 658.5,389.9 641.2,375.2" fill="#a6282b" />
<polygon points="690.4,354.9 720.0,352.0 720.0,381.0 706.3,375.2" fill="#a6282b" />
<polygon points="558.8,381.0 571.8,378.1 580.5,379.5 561.7,385.3" fill="#ffffff" />
</g>
<g clip-path="url(#rc11)">
<rect x="720" y="300" width="160" height="120" fill="#c07838"/>
<polygon points="700.0,300.0 717.3,300.0 708.7,310.1 700.0,311.6" fill="#d2fcd2" />
<polygon points="708.7,300.0 772.3,300.0 760.7,308.7 743.4,311.6 728.9,311.6 708.7,308.7" fill="#e2dcb8" />
<polygon points="766.5,300.0 844.6,300.0 851.8,308.7 801.2,305.8 772.3,305.8" fill="#c5a562" />
<polygon points="856.1,300.0 864.8,300.0 880.0,311.6 880.0,317.3 859.0,314.5" fill="#e2dcb8" />
<polygon points="700.0,326.0 734.7,321.7 737.6,341.9 700.0,340.5" fill="#c5a562" />
<polygon points="734.7,321.7 772.3,321.7 781.0,326.0 801.2,320.2 830.1,308.7 838.8,315.9 853.2,324.6 844.6,334.7 830.1,343.4 837.3,354.9 830.1,357.8 815.7,354.9 804.1,352.0 786.7,347.7 772.3,347.7 757.8,352.0 743.4,349.2 734.7,343.4 740.5,328.9" fill="#a6282b" />
<polygon points="769.4,343.4 801.2,343.4 815.7,346.3 801.2,349.2 772.3,349.2" fill="#c5a562" />
<polygon points="700.0,356.4 714.5,346.3 733.3,344.8 757.8,352.0 781.0,354.9 789.6,362.2 801.2,360.7 804.1,375.2 795.4,376.6 786.7,363.6 775.2,367.9 766.5,375.2 775.2,383.9 766.5,392.5 757.8,389.6 743.4,381.0 728.9,372.3 714.5,367.9 700.0,365.1" fill="#a6282b" />
<polygon points="783.9,350.6 795.4,352.0 792.5,357.8 783.9,356.4" fill="#c5a562" />
<polygon points="760.7,372.3 781.0,367.9 789.6,375.2 792.5,386.7 772.3,386.7 769.4,381.0" fill="#c5a562" />
<polygon points="781.0,398.3 792.5,398.3 801.2,409.9 795.4,420.0 781.0,420.0 786.7,407.0" fill="#a6282b" />
<polygon points="844.6,328.9 880.0,326.0 880.0,401.2 859.0,401.2 844.6,386.7 827.2,372.3 844.6,357.8" fill="#c5a562" />
<polygon points="859.0,349.2 880.0,347.7 880.0,386.7 859.0,381.0 856.1,357.8" fill="#e2dcb8" />
<polygon points="864.8,369.4 880.0,367.9 880.0,404.1 861.9,401.2 859.0,389.6" fill="#d2fcd2" />
<polygon points="873.5,372.3 880.0,372.3 880.0,381.0 873.5,379.5" fill="#77e37a" />
<polygon points="861.9,398.3 880.0,396.9 880.0,405.5 864.8,404.1" fill="#77e37a" />
<polygon points="801.2,386.7 844.6,386.7 859.0,401.2 856.1,415.7 815.7,420.0 804.1,404.1" fill="#c5a562" />
<polygon points="844.6,398.3 880.0,395.4 880.0,420.0 812.8,420.0" fill="#c5a562" />
<polygon points="809.9,389.6 830.1,392.5 833.0,401.2 812.8,401.2" fill="#e2dcb8" />
<polygon points="864.8,300.0 880.0,300.0 880.0,310.1 864.8,310.1" fill="url(#hat)" />
<polygon points="700.0,401.2 726.0,404.1 728.9,420.0 700.0,420.0" fill="#e2dcb8" />
<polygon points="727.5,381.0 731.8,381.0 731.8,383.9 727.5,383.9" fill="#ffffff" />
</g>
<g clip-path="url(#rc12)">
<polygon points="860.0,310.4 873.0,315.6 875.6,332.5 860.0,335.1" fill="#c07838" />
<polygon points="860.0,326.0 899.0,326.0 896.4,362.4 886.0,357.2 860.0,354.6" fill="#c5a562" />
<polygon points="860.0,349.4 892.5,352.0 893.8,372.8 860.0,372.8" fill="#e2dcb8" />
<polygon points="883.4,339.0 899.0,326.0 938.0,320.8 951.0,322.1 948.4,328.6 927.6,329.9 899.0,365.0 899.0,378.0 886.0,372.8 879.5,358.5" fill="#d2fcd2" />
<polygon points="897.7,372.8 899.0,358.5 909.4,332.5 927.6,328.6 951.0,323.4 985.0,331.2 985.0,378.0 951.0,404.0 925.0,404.0 902.9,391.0" fill="#77e37a" />
<polygon points="899.0,372.8 909.4,345.5 927.6,339.0 951.0,332.5 985.0,331.2 985.0,370.2 951.0,398.8 932.8,398.8 912.0,391.0 899.0,383.2" fill="#33bb3b" />
<polygon points="902.9,372.8 915.9,349.4 927.6,342.9 951.0,349.4 985.0,349.4 985.0,367.6 958.8,391.0 943.2,393.6 925.0,388.4 905.5,383.2" fill="#2b8a50" />
<polygon points="918.5,367.6 938.0,352.0 951.0,350.7 985.0,352.0 985.0,365.0 964.0,367.6 958.8,378.0 951.0,389.7 938.0,388.4 925.0,380.6 918.5,372.8" fill="#006400" />
<polygon points="912.0,406.5 943.2,404.0 948.4,416.9 912.0,416.9" fill="#33bb3b" />
<polygon points="918.5,410.4 943.2,407.8 943.2,416.9 919.8,416.9" fill="#2b8a50" />
<polygon points="905.5,414.3 919.8,411.7 919.8,422.1 906.8,422.1" fill="#006400" />
<polygon points="860.0,383.2 899.0,383.2 901.6,406.5 860.0,406.5" fill="#d2fcd2" />
<polygon points="883.4,388.4 904.2,391.0 909.4,401.4 888.6,401.4" fill="#e2dcb8" />
<polygon points="862.6,398.8 883.4,397.5 882.1,405.2 865.2,404.0" fill="#77e37a" />
</g>
<g clip-path="url(#rc13)">
<polygon points="860.0,310.4 873.0,315.6 875.6,332.5 860.0,335.1" fill="#c07838" />
<polygon points="860.0,326.0 899.0,326.0 896.4,362.4 886.0,357.2 860.0,354.6" fill="#c5a562" />
<polygon points="860.0,349.4 892.5,352.0 893.8,372.8 860.0,372.8" fill="#e2dcb8" />
<polygon points="883.4,339.0 899.0,326.0 938.0,320.8 951.0,322.1 948.4,328.6 927.6,329.9 899.0,365.0 899.0,378.0 886.0,372.8 879.5,358.5" fill="#d2fcd2" />
<polygon points="897.7,372.8 899.0,358.5 909.4,332.5 927.6,328.6 951.0,323.4 985.0,331.2 985.0,378.0 951.0,404.0 925.0,404.0 902.9,391.0" fill="#77e37a" />
<polygon points="899.0,372.8 909.4,345.5 927.6,339.0 951.0,332.5 985.0,331.2 985.0,370.2 951.0,398.8 932.8,398.8 912.0,391.0 899.0,383.2" fill="#33bb3b" />
<polygon points="902.9,372.8 915.9,349.4 927.6,342.9 951.0,349.4 985.0,349.4 985.0,367.6 958.8,391.0 943.2,393.6 925.0,388.4 905.5,383.2" fill="#2b8a50" />
<polygon points="918.5,367.6 938.0,352.0 951.0,350.7 985.0,352.0 985.0,365.0 964.0,367.6 958.8,378.0 951.0,389.7 938.0,388.4 925.0,380.6 918.5,372.8" fill="#006400" />
<polygon points="912.0,406.5 943.2,404.0 948.4,416.9 912.0,416.9" fill="#33bb3b" />
<polygon points="918.5,410.4 943.2,407.8 943.2,416.9 919.8,416.9" fill="#2b8a50" />
<polygon points="905.5,414.3 919.8,411.7 919.8,422.1 906.8,422.1" fill="#006400" />
<polygon points="860.0,383.2 899.0,383.2 901.6,406.5 860.0,406.5" fill="#d2fcd2" />
<polygon points="883.4,388.4 904.2,391.0 909.4,401.4 888.6,401.4" fill="#e2dcb8" />
<polygon points="862.6,398.8 883.4,397.5 882.1,405.2 865.2,404.0" fill="#77e37a" />
</g>
<g clip-path="url(#rc14)">
<polygon points="860.0,310.4 873.0,315.6 875.6,332.5 860.0,335.1" fill="#c07838" />
<polygon points="860.0,326.0 899.0,326.0 896.4,362.4 886.0,357.2 860.0,354.6" fill="#c5a562" />
<polygon points="860.0,349.4 892.5,352.0 893.8,372.8 860.0,372.8" fill="#e2dcb8" />
<polygon points="883.4,339.0 899.0,326.0 938.0,320.8 951.0,322.1 948.4,328.6 927.6,329.9 899.0,365.0 899.0,378.0 886.0,372.8 879.5,358.5" fill="#d2fcd2" />
<polygon points="897.7,372.8 899.0,358.5 909.4,332.5 927.6,328.6 951.0,323.4 985.0,331.2 985.0,378.0 951.0,404.0 925.0,404.0 902.9,391.0" fill="#77e37a" />
<polygon points="899.0,372.8 909.4,345.5 927.6,339.0 951.0,332.5 985.0,331.2 985.0,370.2 951.0,398.8 932.8,398.8 912.0,391.0 899.0,383.2" fill="#33bb3b" />
<polygon points="902.9,372.8 915.9,349.4 927.6,342.9 951.0,349.4 985.0,349.4 985.0,367.6 958.8,391.0 943.2,393.6 925.0,388.4 905.5,383.2" fill="#2b8a50" />
<polygon points="918.5,367.6 938.0,352.0 951.0,350.7 985.0,352.0 985.0,365.0 964.0,367.6 958.8,378.0 951.0,389.7 938.0,388.4 925.0,380.6 918.5,372.8" fill="#006400" />
<polygon points="912.0,406.5 943.2,404.0 948.4,416.9 912.0,416.9" fill="#33bb3b" />
<polygon points="918.5,410.4 943.2,407.8 943.2,416.9 919.8,416.9" fill="#2b8a50" />
<polygon points="905.5,414.3 919.8,411.7 919.8,422.1 906.8,422.1" fill="#006400" />
<polygon points="860.0,383.2 899.0,383.2 901.6,406.5 860.0,406.5" fill="#d2fcd2" />
<polygon points="883.4,388.4 904.2,391.0 909.4,401.4 888.6,401.4" fill="#e2dcb8" />
<polygon points="862.6,398.8 883.4,397.5 882.1,405.2 865.2,404.0" fill="#77e37a" />
</g>
<g clip-path="url(#rc15)">
<rect x="390" y="300" width="100" height="100" fill="#33bb3b"/>
<polygon points="390.0,315.0 398.0,315.0 398.0,320.0 390.0,321.0" fill="#2b8a50" />
<polygon points="435.0,300.0 490.0,300.0 490.0,308.0 479.9,312.0 465.9,320.0 451.9,325.0 445.9,322.0 441.9,312.0" fill="#006400" />
<polygon points="428.0,306.0 435.0,300.0 445.9,300.0 445.9,312.0 451.9,324.0 465.9,319.0 479.9,311.0 490.0,306.0 490.0,315.0 475.9,320.0 461.9,330.0 445.9,333.0 432.0,330.0 426.0,323.0" fill="#2b8a50" />
<polygon points="467.9,333.0 490.0,317.0 490.0,342.0 473.9,342.0" fill="#77e37a" />
<polygon points="406.0,338.0 420.0,336.0 435.0,342.0 437.0,355.9 435.0,369.9 420.0,369.9 412.0,359.9 408.0,347.0" fill="#2b8a50" />
<polygon points="416.0,347.0 430.0,348.0 433.0,355.9 428.0,360.9 416.0,359.9" fill="#006400" />
<polygon points="435.0,340.0 449.9,339.0 471.9,346.0 471.9,355.9 459.9,365.9 441.9,366.9 436.0,357.9" fill="#77e37a" />
<polygon points="441.9,346.0 465.9,347.0 466.9,353.9 455.9,363.9 443.9,363.9 438.0,357.9" fill="#d2fcd2" />
<polygon points="444.9,352.9 457.9,353.9 451.9,362.9 441.9,361.9" fill="#e2dcb8" />
<polygon points="445.9,365.9 475.9,348.0 490.0,343.0 490.0,379.9 475.9,381.9 445.9,373.9" fill="#2b8a50" />
<polygon points="476.9,343.0 490.0,340.0 490.0,359.9 479.9,358.9" fill="#006400" />
<polygon points="458.9,365.9 472.9,365.9 472.9,371.9 459.9,371.9" fill="#006400" />
<polygon points="412.0,369.9 445.9,369.9 465.9,377.9 471.9,400.0 412.0,400.0" fill="#77e37a" />
<polygon points="423.0,377.9 459.9,379.9 461.9,395.9 426.0,389.9" fill="#d2fcd2" />
<polygon points="445.9,387.9 453.9,389.9 451.9,397.9 443.9,395.9" fill="#e2dcb8" />
<polygon points="471.9,369.9 490.0,363.9 490.0,400.0 473.9,400.0" fill="#77e37a" />
<polygon points="479.9,375.9 490.0,371.9 490.0,400.0 477.9,400.0" fill="#d2fcd2" />
<polygon points="481.9,387.9 490.0,385.9 490.0,400.0 482.9,400.0" fill="#e2dcb8" />
<polygon points="401.0,306.0 420.0,304.0 428.0,312.0 420.0,326.0 404.0,324.0" fill="#77e37a" />
<polygon points="404.0,307.0 419.0,306.0 423.0,313.0 415.0,320.0 405.0,318.0" fill="#d2fcd2" />
<polygon points="407.0,308.0 418.0,308.0 420.0,313.0 412.0,318.0 407.0,316.0" fill="#e2dcb8" />
<polygon points="410.0,311.0 414.0,311.0 413.0,314.0" fill="#c5a562" />
<polygon points="437.0,300.0 456.9,300.0 455.9,301.2 438.0,301.2" fill="#ffffff" />
</g>
<g clip-path="url(#rc16)">
<rect x="655" y="283" width="135" height="62" fill="#c5a562"/>
<polygon points="633.0,280.0 703.7,280.0 696.6,283.5 656.0,293.3 633.0,290.6" fill="#d2fcd2" />
<polygon points="656.0,293.3 696.6,283.5 703.7,290.6 693.1,315.3 678.9,310.0 663.0,301.2" fill="#77e37a" />
<polygon points="657.7,292.4 678.9,290.6 693.1,304.7 689.5,315.3 671.9,311.8 663.0,301.2" fill="#33bb3b" />
<polygon points="678.9,287.1 714.3,285.3 739.0,303.0 735.5,311.8 707.2,311.8 689.5,315.3 693.1,301.2" fill="#d2fcd2" />
<polygon points="710.7,283.5 756.7,292.4 774.3,301.2 756.7,310.0 739.0,311.8 731.9,299.4" fill="#e2dcb8" />
<polygon points="756.7,301.2 800.0,304.7 800.0,320.6 746.1,322.4" fill="#c07838" />
<polygon points="678.9,315.3 739.0,311.8 756.7,310.0 800.0,306.5 800.0,310.0 739.0,317.1 686.0,322.4" fill="#e2dcb8" />
<polygon points="678.9,325.9 714.3,322.4 739.0,318.9 742.5,329.5 714.3,338.3 686.0,336.5" fill="#c07838" />
<polygon points="735.5,321.5 800.0,320.6 800.0,360.0 735.5,360.0" fill="#a6282b" />
<polygon points="675.4,341.0 735.5,339.2 735.5,360.0 675.4,360.0" fill="#c07838" />
</g>
<g clip-path="url(#rc17)">
<polygon points="563.5,250.4 591.8,249.1 595.7,259.4 577.7,271.0 563.5,272.3" fill="#77e37a" />
<polygon points="570.0,251.7 582.8,250.4 580.3,262.0 570.0,263.3" fill="#33bb3b" />
</g>
<g clip-path="url(#rc18)">
<polygon points="593.2,246.1 644.6,252.5 660.6,266.9 628.5,266.9 590.0,258.9" fill="#e2dcb8" />
<polygon points="593.2,233.2 612.4,234.8 628.5,242.9 644.6,250.9 644.6,262.1 625.3,258.9 596.4,252.5 593.2,246.1" fill="#c5a562" />
<polygon points="628.5,239.6 700.0,236.4 700.0,249.3 644.6,249.3" fill="#c07838" />
<polygon points="644.6,262.1 700.0,258.9 700.0,283.0 660.6,291.0 644.6,278.2" fill="#e2dcb8" />
<polygon points="543.4,273.4 577.1,275.0 577.1,291.0 548.2,294.3" fill="#77e37a" />
<polygon points="548.2,275.0 567.5,278.2 564.3,287.8 549.8,287.8" fill="#33bb3b" />
</g>
<line x1="250" y1="485.3" x2="985" y2="485.3" stroke="#b4b4b4" stroke-width="1.6" stroke-dasharray="1.6,5.2"/>
<line x1="250" y1="458.5" x2="985" y2="458.5" stroke="#b4b4b4" stroke-width="1.6" stroke-dasharray="1.6,5.2"/>
<line x1="250" y1="431.7" x2="985" y2="431.7" stroke="#b4b4b4" stroke-width="1.6" stroke-dasharray="1.6,5.2"/>
<line x1="250" y1="404.9" x2="985" y2="404.9" stroke="#b4b4b4" stroke-width="1.6" stroke-dasharray="1.6,5.2"/>
<line x1="250" y1="378.1" x2="985" y2="378.1" stroke="#b4b4b4" stroke-width="1.6" stroke-dasharray="1.6,5.2"/>
<line x1="250" y1="351.3" x2="985" y2="351.3" stroke="#b4b4b4" stroke-width="1.6" stroke-dasharray="1.6,5.2"/>
<line x1="250" y1="324.5" x2="985" y2="324.5" stroke="#b4b4b4" stroke-width="1.6" stroke-dasharray="1.6,5.2"/>
<line x1="250" y1="297.7" x2="985" y2="297.7" stroke="#b4b4b4" stroke-width="1.6" stroke-dasharray="1.6,5.2"/>
<line x1="250" y1="270.9" x2="985" y2="270.9" stroke="#b4b4b4" stroke-width="1.6" stroke-dasharray="1.6,5.2"/>
<line x1="250" y1="244.1" x2="985" y2="244.1" stroke="#b4b4b4" stroke-width="1.6" stroke-dasharray="1.6,5.2"/>
<line x1="250" y1="217.3" x2="985" y2="217.3" stroke="#b4b4b4" stroke-width="1.6" stroke-dasharray="1.6,5.2"/>
<line x1="342.3" y1="217" x2="342.3" y2="499" stroke="#b4b4b4" stroke-width="1.6" stroke-dasharray="1.6,5.2"/>
<line x1="434.1" y1="217" x2="434.1" y2="499" stroke="#b4b4b4" stroke-width="1.6" stroke-dasharray="1.6,5.2"/>
<line x1="525.9" y1="217" x2="525.9" y2="499" stroke="#b4b4b4" stroke-width="1.6" stroke-dasharray="1.6,5.2"/>
<line x1="617.7" y1="217" x2="617.7" y2="499" stroke="#b4b4b4" stroke-width="1.6" stroke-dasharray="1.6,5.2"/>
<line x1="709.5" y1="217" x2="709.5" y2="499" stroke="#b4b4b4" stroke-width="1.6" stroke-dasharray="1.6,5.2"/>
<line x1="801.3" y1="217" x2="801.3" y2="499" stroke="#b4b4b4" stroke-width="1.6" stroke-dasharray="1.6,5.2"/>
<line x1="893.1" y1="217" x2="893.1" y2="499" stroke="#b4b4b4" stroke-width="1.6" stroke-dasharray="1.6,5.2"/>
</g>
<polygon points="250.0,217.0 583.0,217.0 594.0,223.0 586.0,233.0 594.0,244.0 585.0,249.0 568.5,249.0 562.0,252.0 536.0,251.0 522.0,254.0 520.0,262.0 507.5,273.0 496.0,279.0 482.0,282.5 469.0,282.5 464.0,286.0 463.2,294.0 457.0,299.0 444.0,300.5 437.5,304.0 427.8,307.0 410.2,304.5 399.5,301.6 404.3,305.8 406.7,314.3 392.3,316.1 377.8,313.1 368.2,314.3 350.1,315.5 346.5,317.9 347.7,323.9 356.1,326.3 374.2,328.7 392.3,333.6 398.3,340.8 406.7,345.6 412.8,352.8 415.2,358.9 412.8,367.3 409.2,379.3 404.3,386.6 390.6,386.1 370.5,385.1 354.4,385.1 338.4,385.7 320.3,384.1 302.2,383.7 290.2,382.0 282.1,384.1 270.1,387.1 264.1,390.1 268.1,396.1 272.1,402.1 276.1,410.2 275.1,420.2 274.1,428.2 270.1,436.3 264.1,438.3 260.0,446.3 264.1,450.3 274.1,456.3 271.1,464.4 270.1,470.4 282.1,470.4 294.2,469.4 306.2,470.4 316.3,472.4 320.3,478.4 330.3,482.4 346.4,476.4 362.4,475.4 380.5,475.4 394.6,472.4 406.6,468.4 420.7,462.4 426.7,454.3 436.7,448.3 430.7,446.3 426.7,438.3 430.7,432.2 438.8,428.2 446.8,422.2 450.8,415.2 470.9,410.2 486.9,407.1 493.7,400.0 489.6,392.1 492.9,387.3 504.1,383.3 520.2,384.1 541.0,388.9 555.5,385.7 563.5,380.9 576.4,377.7 590.8,373.7 605.3,374.5 619.8,377.7 627.8,388.9 639.0,397.0 640.0,399.4 654.5,402.7 664.1,407.5 678.6,412.3 693.0,418.7 707.5,426.7 723.5,433.2 730.0,444.4 728.4,452.4 723.5,458.9 736.4,452.4 742.8,447.6 749.2,442.8 742.8,436.4 739.6,431.6 749.2,426.7 762.1,429.2 771.7,431.6 773.3,430.0 768.5,425.1 752.4,418.7 734.8,410.7 730.0,407.5 707.5,404.3 689.8,394.6 683.4,383.4 665.7,375.3 659.3,368.9 657.7,359.3 665.7,355.3 681.8,356.1 685.0,358.5 688.2,359.3 696.2,362.5 704.3,365.7 712.3,373.7 720.3,380.2 736.4,386.6 752.4,393.0 768.5,396.2 784.6,401.8 788.2,404.3 789.8,423.5 796.2,430.0 799.5,436.4 807.5,439.6 813.9,449.2 822.0,458.9 831.6,468.5 836.4,474.9 846.0,479.8 855.7,478.2 858.9,468.5 868.5,462.1 875.0,455.7 865.3,450.8 852.5,442.8 860.5,439.6 849.3,430.0 852.5,423.5 865.3,426.7 875.0,423.5 884.6,420.3 897.5,418.7 913.5,415.5 919.9,417.1 921.0,422.0 919.9,436.4 926.4,442.8 929.6,452.4 934.4,462.1 939.2,468.5 953.7,473.3 969.7,479.8 985.0,481.4 985.0,499.0 638.0,499.0 637.4,496.5 627.8,482.1 637.4,470.8 623.0,470.8 611.7,467.6 592.4,473.3 576.4,472.4 552.3,470.8 528.2,475.7 504.1,473.3 500.0,474.4 470.9,477.4 446.8,480.4 430.7,484.5 414.7,490.5 394.6,494.5 382.5,495.5 370.5,495.5 354.4,493.5 342.4,490.5 334.3,486.5 326.3,488.5 320.3,497.5 320.0,499.0 250.0,499.0" fill="#00c8c8" stroke="#333" stroke-width="1.4" stroke-linejoin="round"/>
<path d="M610.0,217.0 L823.0,217.0 L823.0,220.0 L820.0,230.0 L802.0,239.0 L781.0,238.0 L770.0,232.0 L746.7,235.1 L730.6,239.1 L706.5,243.9 L698.5,247.1 L685.7,240.7 L674.4,235.9 L660.0,239.1 L642.3,240.7 L631.0,243.9 L613.7,249.1 L608.5,242.7 L608.5,232.4 L607.3,224.7 L608.5,219.6Z M614.0,226.0 L622.0,223.0 L631.0,226.0 L632.0,232.0 L622.0,235.0 L615.0,233.0Z M637.0,219.0 L660.0,219.0 L664.0,228.0 L660.0,236.0 L645.0,238.0 L636.0,231.0Z M630.0,238.0 L648.0,238.0 L656.0,242.0 L640.0,243.0 L630.0,241.0Z M668.0,217.0 L700.0,217.0 L698.0,224.0 L680.0,226.0 L668.0,222.0Z" fill="#00c8c8" fill-rule="evenodd" stroke="#333" stroke-width="1.4" stroke-linejoin="round"/>
<polygon points="985.0,356.0 977.8,356.1 965.0,367.3 958.5,380.2 945.6,388.2 942.4,396.2 945.6,407.5 955.3,413.9 969.7,417.1 985.0,415.5" fill="#00c8c8" stroke="#333" stroke-width="1.4" stroke-linejoin="round"/>
<polygon points="921.5,420.3 945.6,421.9 968.1,420.3 969.7,425.1 945.6,427.6 924.8,428.4" fill="#00c8c8" stroke="#333" stroke-width="1.4" stroke-linejoin="round"/>
<polygon points="414.0,356.0 420.0,360.0 425.0,366.0 421.0,366.5 415.0,361.0" fill="#00c8c8" stroke="#333" stroke-width="1.4" stroke-linejoin="round"/>
<polygon points="522.0,256.0 532.0,253.0 543.0,255.0 541.0,262.0 533.0,266.0 524.0,264.0" fill="#00c8c8" stroke="#333" stroke-width="1.4" stroke-linejoin="round"/>
<polygon points="251.6,240.7 262.9,239.1 274.1,235.1 282.1,230.3 287.8,227.9 298.2,225.9 304.6,226.2 314.3,227.9 325.5,230.3 330.3,232.7 333.5,237.5 327.1,241.5 322.3,245.5 320.7,249.5 323.1,256.8 319.1,266.4 312.7,268.0 298.2,270.4 282.1,273.6 266.1,274.4 256.4,276.8 252.4,274.4 254.8,268.0 253.2,263.2 259.6,259.2 253.2,253.6 254.8,247.1" fill="url(#hat)" stroke="#333" stroke-width="1.4" stroke-linejoin="round"/>
<polygon points="344.6,218.4 395.2,218.4 404.2,222.9 408.7,229.6 413.2,235.2 423.3,238.6 432.3,242.5 434.6,247.6 438.0,252.1 440.2,256.6 438.0,258.9 449.2,257.7 460.4,258.9 466.1,262.2 463.8,267.9 457.1,272.3 451.4,275.7 460.4,279.1 455.9,282.5 442.4,285.8 431.2,287.0 415.5,288.1 403.1,287.0 390.7,288.1 379.5,289.2 370.5,292.6 361.5,293.7 350.2,293.7 341.2,296.0 334.5,298.2 336.7,294.8 343.5,291.5 352.5,284.7 361.5,281.3 375.0,280.2 384.0,276.8 390.7,273.5 378.4,278.0 367.1,278.0 357.0,274.6 346.9,273.5 337.9,272.3 343.5,269.0 354.7,266.7 360.4,262.2 359.2,257.7 348.0,260.0 352.5,255.5 361.5,253.2 377.2,253.2 381.7,248.7 379.5,243.1 377.2,237.5 370.5,237.5 368.2,234.1 375.0,230.7 378.4,229.6 363.7,230.7 352.5,233.0 341.2,231.9 340.1,229.6 345.7,225.1 348.0,221.7 344.0,217.0" fill="url(#hat)" stroke="#333" stroke-width="1.4" stroke-linejoin="round"/>
<polygon points="606.9,391.3 608.5,400.2 603.7,411.4 595.7,408.2 590.8,398.6 597.3,395.3" fill="url(#hat)" stroke="#333" stroke-width="1.4" stroke-linejoin="round"/>
<polygon points="606.9,415.4 613.3,424.3 610.1,443.5 595.7,446.0 587.6,443.5 589.2,430.7 584.4,417.8 595.7,420.2" fill="url(#hat)" stroke="#333" stroke-width="1.4" stroke-linejoin="round"/>
<polygon points="480.0,434.7 489.6,432.3 497.7,435.5 491.2,441.1 483.2,438.7" fill="url(#hat)" stroke="#333" stroke-width="1.4" stroke-linejoin="round"/>
<polygon points="504.1,430.7 513.7,433.1 505.7,434.0" fill="url(#hat)" stroke="#333" stroke-width="1.4" stroke-linejoin="round"/>
<polygon points="456.0,444.0 462.0,443.0 461.0,447.0 456.0,447.0" fill="url(#hat)" stroke="#333" stroke-width="1.4" stroke-linejoin="round"/>
<polygon points="664.1,458.9 672.1,456.5 688.2,458.1 707.5,457.3 718.7,455.7 712.3,465.3 710.7,474.9 701.0,473.3 685.0,466.9 665.7,462.1" fill="url(#hat)" stroke="#333" stroke-width="1.4" stroke-linejoin="round"/>
<polygon points="866.9,491.0 881.4,492.6 907.1,494.2 916.7,495.8 913.5,498.2 889.4,498.2 868.5,496.6" fill="url(#hat)" stroke="#333" stroke-width="1.4" stroke-linejoin="round"/>
<polygon points="848.0,423.0 855.6,433.0 860.0,426.0" fill="#c5a562" stroke="#333" stroke-width="1.4" stroke-linejoin="round"/>
<polygon points="862.0,425.0 868.0,434.0 872.0,426.0" fill="#c5a562" stroke="#333" stroke-width="1.4" stroke-linejoin="round"/>
<polygon points="876.0,425.0 881.4,433.0 885.0,425.0" fill="#c5a562" stroke="#333" stroke-width="1.4" stroke-linejoin="round"/>
<polygon points="865.3,450.8 875.0,452.4 887.8,458.9 891.0,464.5 881.4,462.1 868.5,455.7" fill="none" stroke="#333" stroke-width="1.3" stroke-linejoin="round"/>
<polygon points="883.0,419.5 891.0,419.5 891.8,424.3 883.8,424.3" fill="none" stroke="#333" stroke-width="1.3" stroke-linejoin="round"/>
<polygon points="897.4,422.7 903.9,422.7 903.9,425.9 897.4,425.9" fill="none" stroke="#333" stroke-width="1.3" stroke-linejoin="round"/>
<polygon points="895.8,431.6 907.1,430.8 908.7,436.4 897.4,437.2" fill="none" stroke="#333" stroke-width="1.3" stroke-linejoin="round"/>
<polygon points="908.7,439.6 921.5,440.4 923.2,446.8 911.9,446.8" fill="none" stroke="#333" stroke-width="1.3" stroke-linejoin="round"/>
<polygon points="913.5,452.4 921.5,452.4 922.3,458.9 914.3,458.9" fill="none" stroke="#333" stroke-width="1.3" stroke-linejoin="round"/>
<polygon points="923.2,462.1 931.2,462.9 930.4,466.9 923.2,466.1" fill="none" stroke="#333" stroke-width="1.3" stroke-linejoin="round"/>
<polygon points="891.0,449.2 897.4,449.2 897.4,453.3 891.0,453.3" fill="none" stroke="#333" stroke-width="1.3" stroke-linejoin="round"/>
<polygon points="875.0,466.9 881.4,466.9 881.4,470.9 875.0,470.9" fill="none" stroke="#333" stroke-width="1.3" stroke-linejoin="round"/>
<polygon points="884.6,468.5 891.0,468.5 891.0,473.3 884.6,473.3" fill="none" stroke="#333" stroke-width="1.3" stroke-linejoin="round"/>
<polygon points="897.4,471.7 903.9,470.1 905.5,474.9 899.1,475.7" fill="none" stroke="#333" stroke-width="1.3" stroke-linejoin="round"/>
<polygon points="907.1,476.5 913.5,476.5 913.5,480.6 907.1,480.6" fill="none" stroke="#333" stroke-width="1.3" stroke-linejoin="round"/>
<polygon points="887.8,478.2 894.2,477.3 895.8,481.4 889.4,482.2" fill="none" stroke="#333" stroke-width="1.3" stroke-linejoin="round"/>
<polygon points="929.6,476.5 937.6,475.7 937.6,481.4 930.4,481.4" fill="none" stroke="#333" stroke-width="1.3" stroke-linejoin="round"/>
<polygon points="944.0,478.2 952.1,479.8 950.5,487.0 944.0,485.4" fill="none" stroke="#333" stroke-width="1.3" stroke-linejoin="round"/>
<polygon points="878.2,458.9 883.0,458.9 883.0,462.1 878.2,462.1" fill="none" stroke="#333" stroke-width="1.3" stroke-linejoin="round"/>
<polygon points="809.1,452.4 815.5,452.4 815.5,457.3 809.1,457.3" fill="none" stroke="#333" stroke-width="1.3" stroke-linejoin="round"/>
<polygon points="812.3,458.9 818.7,459.7 817.9,463.7 812.3,462.9" fill="none" stroke="#333" stroke-width="1.3" stroke-linejoin="round"/>
<polygon points="794.6,434.8 802.7,436.4 801.1,441.2 794.6,439.6" fill="none" stroke="#333" stroke-width="1.3" stroke-linejoin="round"/>
<polygon points="916.7,430.0 924.8,430.0 923.2,434.8 916.7,434.8" fill="none" stroke="#333" stroke-width="1.3" stroke-linejoin="round"/>
<polygon points="936.0,471.7 942.4,471.7 942.4,474.9 936.0,474.9" fill="none" stroke="#333" stroke-width="1.3" stroke-linejoin="round"/>
<polygon points="916.7,484.6 923.2,484.6 923.2,487.8 916.7,487.8" fill="none" stroke="#333" stroke-width="1.3" stroke-linejoin="round"/>
<polygon points="704.3,368.9 713.9,372.1 717.1,376.9 707.5,374.5" fill="none" stroke="#333" stroke-width="1.3" stroke-linejoin="round"/>
<polygon points="717.1,378.6 730.0,381.8 736.4,386.6 723.5,385.0" fill="none" stroke="#333" stroke-width="1.3" stroke-linejoin="round"/>
<polygon points="736.4,388.2 752.4,391.4 755.7,394.6 739.6,393.0" fill="none" stroke="#333" stroke-width="1.3" stroke-linejoin="round"/>
<polygon points="696.2,364.1 702.7,366.5 703.5,371.3 697.8,368.9" fill="none" stroke="#333" stroke-width="1.3" stroke-linejoin="round"/>
<polygon points="346.9,240.9 352.5,238.6 354.7,239.7 349.1,243.1" fill="none" stroke="#333" stroke-width="1.3" stroke-linejoin="round"/>
<polygon points="350.2,252.1 355.9,252.1 354.7,255.5 351.4,254.4" fill="none" stroke="#333" stroke-width="1.3" stroke-linejoin="round"/>
<polyline points="480.5,282.4 486.5,286.8 495.4,288.3 507.3,291.3 511.7,297.2 520.6,297.2 525.1,300.2 534.0,303.2 542.9,304.7 551.8,306.2 560.8,309.1 571.2,310.6 584.5,311.4" fill="none" stroke="#222" stroke-width="1.6" stroke-linejoin="round"/>
<polyline points="496.9,279.4 510.2,276.4 525.1,277.9 534.0,280.9 540.0,282.4 542.9,286.8" fill="none" stroke="#222" stroke-width="1.6" stroke-linejoin="round"/>
<polyline points="565.2,252.7 560.8,258.6 559.3,266.0 545.9,272.0 544.4,279.4 547.4,285.4 548.9,291.3 551.8,297.2 551.8,303.2 553.3,306.2" fill="none" stroke="#222" stroke-width="1.6" stroke-linejoin="round"/>
<polyline points="594.9,231.9 615.0,231.9" fill="none" stroke="#222" stroke-width="1.6" stroke-linejoin="round"/>
<polyline points="270.8,404.0 285.7,404.0 294.6,405.5 303.5,404.0 313.9,406.2 319.8,410.0 325.8,410.0" fill="none" stroke="#222" stroke-width="1.6" stroke-linejoin="round"/>
<polyline points="319.8,411.4 309.4,415.9 306.5,426.3 306.5,433.7 299.0,441.0" fill="none" stroke="#222" stroke-width="1.6" stroke-linejoin="round"/>
<polyline points="307.9,417.8 306.5,429.7 303.5,435.7 294.6,437.1 300.5,441.6 305.0,444.6 300.5,452.0 303.5,456.5 297.5,465.4 297.5,469.8" fill="none" stroke="#222" stroke-width="1.6" stroke-linejoin="round"/>
<polyline points="430.0,393.5 447.8,395.0 459.7,396.5 474.6,397.9 492.4,399.4" fill="none" stroke="#222" stroke-width="1.6" stroke-linejoin="round"/>
<polyline points="696.4,244.3 699.6,249.1 694.8,258.8 701.2,263.6 702.8,271.6 706.0,278.0 709.2,284.5" fill="none" stroke="#222" stroke-width="1.6" stroke-linejoin="round"/>
<polyline points="790.0,238.9 821.3,238.1 849.5,237.4 858.9,238.9 863.6,240.5" fill="none" stroke="#222" stroke-width="1.6" stroke-linejoin="round"/>
<polyline points="822.9,220.1 826.0,228.0 837.0,229.5 852.6,232.7 852.6,237.4" fill="none" stroke="#222" stroke-width="1.6" stroke-linejoin="round"/>
<polyline points="863.6,240.5 866.7,245.2 871.4,253.0 873.0,262.4 862.0,265.6 865.2,270.2 866.7,274.9 873.0,284.3 877.7,289.0 868.3,295.3 852.6,301.6 849.5,307.8 852.6,311.0" fill="none" stroke="#222" stroke-width="1.6" stroke-linejoin="round"/>
<polyline points="866.7,245.2 877.7,243.6 890.2,240.5 905.9,240.5 913.7,235.8 921.6,226.4 924.7,221.7 940.4,218.6 985.0,218.6" fill="none" stroke="#222" stroke-width="1.6" stroke-linejoin="round"/>
<polyline points="868.3,274.9 891.8,271.8 915.3,273.4 938.8,276.5 962.3,276.5 985.0,278.1" fill="none" stroke="#222" stroke-width="1.6" stroke-linejoin="round"/>
<polyline points="841.7,320.4 865.2,323.5 884.0,325.1 899.6,326.6 915.3,323.5 924.7,320.4 946.6,320.4 962.3,323.5 970.1,326.6 975.6,342.3 985.0,347.0" fill="none" stroke="#222" stroke-width="1.6" stroke-linejoin="round"/>
<polyline points="924.7,320.4 934.1,323.5 943.5,336.0 948.2,342.3 951.3,358.0" fill="none" stroke="#222" stroke-width="1.6" stroke-linejoin="round"/>
<polyline points="810.7,418.7 833.2,415.5 855.7,412.3 881.4,410.7 897.4,413.9 913.5,410.7 919.9,412.3" fill="none" stroke="#222" stroke-width="1.6" stroke-linejoin="round"/>
<polyline points="950.5,340.0 952.1,356.1 961.7,359.3 977.8,356.1" fill="none" stroke="#222" stroke-width="1.6" stroke-linejoin="round"/>
<polyline points="540.0,304.3 554.5,305.8 564.6,308.7 584.8,311.6 577.6,317.3 573.3,326.0 568.9,331.8 557.3,337.6 547.2,343.4 544.3,347.7" fill="none" stroke="#222" stroke-width="1.6" stroke-linejoin="round"/>
<polyline points="571.8,330.4 592.0,327.5 607.9,328.9 615.2,331.8 625.3,330.4 639.8,328.9 670.1,327.5 667.2,321.7 677.3,317.3 684.6,314.5" fill="none" stroke="#222" stroke-width="1.6" stroke-linejoin="round"/>
<polyline points="544.3,347.7 557.3,347.7 561.7,352.0 568.9,349.2 583.4,346.3 589.2,347.7 597.8,352.0 603.6,346.3 615.2,346.3 621.0,343.4 623.9,339.0" fill="none" stroke="#222" stroke-width="1.6" stroke-linejoin="round"/>
<polyline points="609.4,330.4 609.4,334.7 618.1,337.6 623.9,339.0 638.3,340.5 655.7,337.6 660.0,341.9 673.0,343.4 681.7,344.8 720.0,341.9" fill="none" stroke="#222" stroke-width="1.6" stroke-linejoin="round"/>
<polyline points="681.7,344.8 684.6,354.9 687.5,357.8 699.0,357.8 720.0,353.5" fill="none" stroke="#222" stroke-width="1.6" stroke-linejoin="round"/>
<polyline points="557.3,350.6 561.7,357.8 555.9,363.6 558.8,369.4 563.1,375.2 568.9,378.1 574.7,376.6" fill="none" stroke="#222" stroke-width="1.6" stroke-linejoin="round"/>
<polyline points="708.7,310.8 728.9,313.0 744.8,314.5 747.7,311.6 765.1,308.7 778.1,304.3 789.6,305.8 801.2,305.8 822.9,304.3 844.6,308.7 853.2,310.1" fill="none" stroke="#222" stroke-width="1.6" stroke-linejoin="round"/>
<polyline points="700.0,341.9 714.5,340.5 731.8,337.6 736.1,328.9 737.6,323.1 743.4,320.2 744.8,314.5" fill="none" stroke="#222" stroke-width="1.6" stroke-linejoin="round"/>
<polyline points="746.3,323.1 760.7,326.0 778.1,326.0 792.5,321.7 809.9,317.3 827.2,317.3 844.6,320.2 853.2,323.1 880.0,324.6" fill="none" stroke="#222" stroke-width="1.6" stroke-linejoin="round"/>
<polyline points="731.8,343.4 743.4,347.7 760.7,352.0 772.3,353.5 786.7,350.6 801.2,349.2 815.7,347.7 824.3,343.4 833.0,336.1 844.6,328.9 853.2,323.1" fill="none" stroke="#222" stroke-width="1.6" stroke-linejoin="round"/>
<polyline points="700.0,343.4 714.5,344.8 720.2,343.4 733.3,344.8 743.4,347.7" fill="none" stroke="#222" stroke-width="1.6" stroke-linejoin="round"/>
<polyline points="723.1,362.2 736.1,360.7 757.8,362.2 781.0,363.6 789.6,362.2 786.7,369.4 791.1,378.1 783.9,385.3 775.2,386.7 772.3,394.0 773.7,398.3" fill="none" stroke="#222" stroke-width="1.6" stroke-linejoin="round"/>
<polyline points="723.1,362.2 728.9,372.3 743.4,381.0 757.8,389.6 772.3,396.9" fill="none" stroke="#222" stroke-width="1.6" stroke-linejoin="round"/>
<polyline points="779.5,352.0 783.9,357.8 789.6,362.2" fill="none" stroke="#222" stroke-width="1.6" stroke-linejoin="round"/>
<polyline points="815.7,347.7 822.9,354.9 827.2,363.6 830.1,367.9 844.6,369.4 850.4,370.8 847.5,376.6 846.0,381.0 853.2,389.6 850.4,398.3 853.2,404.1 856.1,412.8 853.2,415.7" fill="none" stroke="#222" stroke-width="1.6" stroke-linejoin="round"/>
<polyline points="772.3,389.6 781.0,386.7 789.6,386.7 801.2,394.0 809.9,391.1 815.7,389.6 822.9,394.0 830.1,398.3 833.0,401.2" fill="none" stroke="#222" stroke-width="1.6" stroke-linejoin="round"/>
<polyline points="801.2,394.0 804.1,398.3 812.8,401.2 830.1,401.2 844.6,399.8 853.2,404.1" fill="none" stroke="#222" stroke-width="1.6" stroke-linejoin="round"/>
<polyline points="853.2,378.1 880.0,381.0" fill="none" stroke="#222" stroke-width="1.6" stroke-linejoin="round"/>
<polyline points="792.5,398.3 798.3,401.2 811.3,408.4 815.7,415.7 812.8,420.0" fill="none" stroke="#222" stroke-width="1.6" stroke-linejoin="round"/>
<polyline points="812.8,420.0 830.1,415.7 844.6,414.2 859.0,411.3 880.0,409.9" fill="none" stroke="#222" stroke-width="1.6" stroke-linejoin="round"/>
<polyline points="655.3,293.0 667.7,291.2 685.3,287.7 699.5,284.1 708.3,285.9 720.7,287.7 734.8,289.4 741.9,293.0 756.0,294.7 773.7,300.0 784.3,303.6" fill="none" stroke="#222" stroke-width="1.6" stroke-linejoin="round"/>
<polyline points="655.3,293.0 664.1,301.8 676.5,307.1 694.2,314.2 710.0,312.4" fill="none" stroke="#222" stroke-width="1.6" stroke-linejoin="round"/>
<polyline points="846.0,376.9 871.7,376.9 884.6,380.2 900.7,381.8 919.9,380.2 945.6,378.6 958.5,380.2" fill="none" stroke="#222" stroke-width="1.6" stroke-linejoin="round"/>
<polyline points="534.0,303.2 538.5,294.3 545.9,291.3 551.8,297.2 553.3,306.2 542.9,304.7 534.0,303.2" fill="none" stroke="#222" stroke-width="1.6" stroke-linejoin="round"/>
<polyline points="404.6,386.0 414.0,388.5 422.7,390.1 432.0,392.5 442.7,394.1 452.0,395.0 462.8,396.1 472.0,398.0 480.9,399.1 494.0,400.1" fill="none" stroke="#222" stroke-width="1.6" stroke-linejoin="round"/>
</g>
<rect x="250.5" y="217.5" width="734" height="281" fill="none" stroke="#000" stroke-width="2"/>
<line x1="246" y1="217.3" x2="250" y2="217.3" stroke="#000" stroke-width="1.5"/>
<text x="243" y="220.6" text-anchor="end" font-family="Liberation Sans" font-weight="bold" font-size="9" textLength="20" lengthAdjust="spacingAndGlyphs">56N</text>
<line x1="246" y1="244.1" x2="250" y2="244.1" stroke="#000" stroke-width="1.5"/>
<text x="243" y="247.4" text-anchor="end" font-family="Liberation Sans" font-weight="bold" font-size="9" textLength="20" lengthAdjust="spacingAndGlyphs">54N</text>
<line x1="246" y1="270.9" x2="250" y2="270.9" stroke="#000" stroke-width="1.5"/>
<text x="243" y="274.2" text-anchor="end" font-family="Liberation Sans" font-weight="bold" font-size="9" textLength="20" lengthAdjust="spacingAndGlyphs">52N</text>
<line x1="246" y1="297.7" x2="250" y2="297.7" stroke="#000" stroke-width="1.5"/>
<text x="243" y="301.0" text-anchor="end" font-family="Liberation Sans" font-weight="bold" font-size="9" textLength="20" lengthAdjust="spacingAndGlyphs">50N</text>
<line x1="246" y1="324.5" x2="250" y2="324.5" stroke="#000" stroke-width="1.5"/>
<text x="243" y="327.8" text-anchor="end" font-family="Liberation Sans" font-weight="bold" font-size="9" textLength="20" lengthAdjust="spacingAndGlyphs">48N</text>
<line x1="246" y1="351.3" x2="250" y2="351.3" stroke="#000" stroke-width="1.5"/>
<text x="243" y="354.6" text-anchor="end" font-family="Liberation Sans" font-weight="bold" font-size="9" textLength="20" lengthAdjust="spacingAndGlyphs">46N</text>
<line x1="246" y1="378.1" x2="250" y2="378.1" stroke="#000" stroke-width="1.5"/>
<text x="243" y="381.4" text-anchor="end" font-family="Liberation Sans" font-weight="bold" font-size="9" textLength="20" lengthAdjust="spacingAndGlyphs">44N</text>
<line x1="246" y1="404.9" x2="250" y2="404.9" stroke="#000" stroke-width="1.5"/>
<text x="243" y="408.2" text-anchor="end" font-family="Liberation Sans" font-weight="bold" font-size="9" textLength="20" lengthAdjust="spacingAndGlyphs">42N</text>
<line x1="246" y1="431.7" x2="250" y2="431.7" stroke="#000" stroke-width="1.5"/>
<text x="243" y="435.0" text-anchor="end" font-family="Liberation Sans" font-weight="bold" font-size="9" textLength="20" lengthAdjust="spacingAndGlyphs">40N</text>
<line x1="246" y1="458.5" x2="250" y2="458.5" stroke="#000" stroke-width="1.5"/>
<text x="243" y="461.8" text-anchor="end" font-family="Liberation Sans" font-weight="bold" font-size="9" textLength="20" lengthAdjust="spacingAndGlyphs">38N</text>
<line x1="246" y1="485.3" x2="250" y2="485.3" stroke="#000" stroke-width="1.5"/>
<text x="243" y="488.6" text-anchor="end" font-family="Liberation Sans" font-weight="bold" font-size="9" textLength="20" lengthAdjust="spacingAndGlyphs">36N</text>
<line x1="250.5" y1="498" x2="250.5" y2="502" stroke="#000" stroke-width="1.5"/>
<text x="250.5" y="508" text-anchor="middle" font-family="Liberation Sans" font-weight="bold" font-size="9" textLength="21" lengthAdjust="spacingAndGlyphs">10W</text>
<line x1="342.3" y1="498" x2="342.3" y2="502" stroke="#000" stroke-width="1.5"/>
<text x="342.3" y="508" text-anchor="middle" font-family="Liberation Sans" font-weight="bold" font-size="9" textLength="13" lengthAdjust="spacingAndGlyphs">5W</text>
<line x1="434.1" y1="498" x2="434.1" y2="502" stroke="#000" stroke-width="1.5"/>
<text x="434.1" y="508" text-anchor="middle" font-family="Liberation Sans" font-weight="bold" font-size="9" textLength="6" lengthAdjust="spacingAndGlyphs">0</text>
<line x1="525.9" y1="498" x2="525.9" y2="502" stroke="#000" stroke-width="1.5"/>
<text x="525.9" y="508" text-anchor="middle" font-family="Liberation Sans" font-weight="bold" font-size="9" textLength="13" lengthAdjust="spacingAndGlyphs">5E</text>
<line x1="617.7" y1="498" x2="617.7" y2="502" stroke="#000" stroke-width="1.5"/>
<text x="617.7" y="508" text-anchor="middle" font-family="Liberation Sans" font-weight="bold" font-size="9" textLength="21" lengthAdjust="spacingAndGlyphs">10E</text>
<line x1="709.5" y1="498" x2="709.5" y2="502" stroke="#000" stroke-width="1.5"/>
<text x="709.5" y="508" text-anchor="middle" font-family="Liberation Sans" font-weight="bold" font-size="9" textLength="21" lengthAdjust="spacingAndGlyphs">15E</text>
<line x1="801.3" y1="498" x2="801.3" y2="502" stroke="#000" stroke-width="1.5"/>
<text x="801.3" y="508" text-anchor="middle" font-family="Liberation Sans" font-weight="bold" font-size="9" textLength="21" lengthAdjust="spacingAndGlyphs">20E</text>
<line x1="893.1" y1="498" x2="893.1" y2="502" stroke="#000" stroke-width="1.5"/>
<text x="893.1" y="508" text-anchor="middle" font-family="Liberation Sans" font-weight="bold" font-size="9" textLength="21" lengthAdjust="spacingAndGlyphs">25E</text>
<line x1="984.9" y1="498" x2="984.9" y2="502" stroke="#000" stroke-width="1.5"/>
<text x="984.9" y="508" text-anchor="middle" font-family="Liberation Sans" font-weight="bold" font-size="9" textLength="21" lengthAdjust="spacingAndGlyphs">30E</text>
<text transform="translate(543,209.1) scale(1.22,1)" font-family="Liberation Sans" font-size="16.3" letter-spacing="3.1">Europe Corn</text>
<polygon points="991.5,237 1001.7,199.5 1011.8,237" fill="#006400" stroke="#000" stroke-width="1.3"/>
<rect x="991.5" y="237.0" width="20.3" height="37.2" fill="#2b8a50" stroke="#000" stroke-width="1.3"/>
<rect x="991.5" y="274.2" width="20.3" height="37.2" fill="#33bb3b" stroke="#000" stroke-width="1.3"/>
<rect x="991.5" y="311.4" width="20.3" height="37.2" fill="#77e37a" stroke="#000" stroke-width="1.3"/>
<rect x="991.5" y="348.6" width="20.3" height="37.2" fill="#d2fcd2" stroke="#000" stroke-width="1.3"/>
<rect x="991.5" y="385.8" width="20.3" height="37.2" fill="#e2dcb8" stroke="#000" stroke-width="1.3"/>
<rect x="991.5" y="423.0" width="20.3" height="37.2" fill="#c5a562" stroke="#000" stroke-width="1.3"/>
<rect x="991.5" y="460.2" width="20.3" height="37.2" fill="#c07838" stroke="#000" stroke-width="1.3"/>
<polygon points="991.5,497.4 1001.7,534.5 1011.8,497.4" fill="#a6282b" stroke="#000" stroke-width="1.3"/>
<text transform="translate(1020,240.5) scale(1.25,1)" font-family="Liberation Sans" font-size="9.3" letter-spacing="1.7">200</text>
<text transform="translate(1020,277.7) scale(1.25,1)" font-family="Liberation Sans" font-size="9.3" letter-spacing="1.7">175</text>
<text transform="translate(1020,314.9) scale(1.25,1)" font-family="Liberation Sans" font-size="9.3" letter-spacing="1.7">150</text>
<text transform="translate(1020,352.1) scale(1.25,1)" font-family="Liberation Sans" font-size="9.3" letter-spacing="1.7">125</text>
<text transform="translate(1020,389.3) scale(1.25,1)" font-family="Liberation Sans" font-size="9.3" letter-spacing="1.7">100</text>
<text transform="translate(1020,426.5) scale(1.25,1)" font-family="Liberation Sans" font-size="9.3" letter-spacing="1.9">75</text>
<text transform="translate(1020,463.7) scale(1.25,1)" font-family="Liberation Sans" font-size="9.3" letter-spacing="1.9">50</text>
<text transform="translate(1020,500.9) scale(1.25,1)" font-family="Liberation Sans" font-size="9.3" letter-spacing="1.9">25</text>
</svg>
<svg class="a" style="left:0;top:660px" width="1245" height="280" viewBox="0 660 1245 280" font-family="Liberation Sans, sans-serif">
<text x="538" y="700.7" text-anchor="middle" font-size="18" letter-spacing="0.4" fill="#333">Europe Corn</text>
<line x1="990" y1="693.5" x2="1004" y2="693.5" stroke="#666" stroke-width="3" stroke-linecap="round"/>
<line x1="990" y1="698.5" x2="1004" y2="698.5" stroke="#666" stroke-width="3" stroke-linecap="round"/>
<line x1="990" y1="703.5" x2="1004" y2="703.5" stroke="#666" stroke-width="3" stroke-linecap="round"/>
<line x1="124" y1="729.5" x2="1008" y2="729.5" stroke="#e6e6e6" stroke-width="1"/>
<line x1="124" y1="783.5" x2="1008" y2="783.5" stroke="#e6e6e6" stroke-width="1"/>
<line x1="124" y1="837.5" x2="1008" y2="837.5" stroke="#e6e6e6" stroke-width="1"/>
<line x1="124" y1="890.5" x2="1008" y2="890.5" stroke="#ccd6eb" stroke-width="1"/>
<line x1="133.5" y1="890" x2="133.5" y2="900" stroke="#ccd6eb" stroke-width="1"/>
<text x="133.9" y="908.5" text-anchor="middle" font-size="11" letter-spacing="1.3" fill="#666">06/01</text>
<line x1="192.5" y1="890" x2="192.5" y2="900" stroke="#ccd6eb" stroke-width="1"/>
<text x="193.6" y="908.5" text-anchor="middle" font-size="11" letter-spacing="1.3" fill="#666">06/03</text>
<line x1="252.5" y1="890" x2="252.5" y2="900" stroke="#ccd6eb" stroke-width="1"/>
<text x="253.3" y="908.5" text-anchor="middle" font-size="11" letter-spacing="1.3" fill="#666">06/05</text>
<line x1="312.5" y1="890" x2="312.5" y2="900" stroke="#ccd6eb" stroke-width="1"/>
<text x="313.0" y="908.5" text-anchor="middle" font-size="11" letter-spacing="1.3" fill="#666">06/07</text>
<line x1="371.5" y1="890" x2="371.5" y2="900" stroke="#ccd6eb" stroke-width="1"/>
<text x="372.8" y="908.5" text-anchor="middle" font-size="11" letter-spacing="1.3" fill="#666">06/09</text>
<line x1="431.5" y1="890" x2="431.5" y2="900" stroke="#ccd6eb" stroke-width="1"/>
<text x="432.5" y="908.5" text-anchor="middle" font-size="11" letter-spacing="1.3" fill="#666">06/11</text>
<line x1="491.5" y1="890" x2="491.5" y2="900" stroke="#ccd6eb" stroke-width="1"/>
<text x="492.2" y="908.5" text-anchor="middle" font-size="11" letter-spacing="1.3" fill="#666">06/13</text>
<line x1="551.5" y1="890" x2="551.5" y2="900" stroke="#ccd6eb" stroke-width="1"/>
<text x="551.9" y="908.5" text-anchor="middle" font-size="11" letter-spacing="1.3" fill="#666">06/15</text>
<line x1="610.5" y1="890" x2="610.5" y2="900" stroke="#ccd6eb" stroke-width="1"/>
<text x="611.6" y="908.5" text-anchor="middle" font-size="11" letter-spacing="1.3" fill="#666">06/17</text>
<line x1="670.5" y1="890" x2="670.5" y2="900" stroke="#ccd6eb" stroke-width="1"/>
<text x="671.3" y="908.5" text-anchor="middle" font-size="11" letter-spacing="1.3" fill="#666">06/19</text>
<line x1="730.5" y1="890" x2="730.5" y2="900" stroke="#ccd6eb" stroke-width="1"/>
<text x="731.0" y="908.5" text-anchor="middle" font-size="11" letter-spacing="1.3" fill="#666">06/21</text>
<line x1="789.5" y1="890" x2="789.5" y2="900" stroke="#ccd6eb" stroke-width="1"/>
<text x="790.8" y="908.5" text-anchor="middle" font-size="11" letter-spacing="1.3" fill="#666">06/23</text>
<line x1="849.5" y1="890" x2="849.5" y2="900" stroke="#ccd6eb" stroke-width="1"/>
<text x="850.5" y="908.5" text-anchor="middle" font-size="11" letter-spacing="1.3" fill="#666">06/25</text>
<line x1="909.5" y1="890" x2="909.5" y2="900" stroke="#ccd6eb" stroke-width="1"/>
<text x="910.2" y="908.5" text-anchor="middle" font-size="11" letter-spacing="1.3" fill="#666">06/27</text>
<line x1="969.5" y1="890" x2="969.5" y2="900" stroke="#ccd6eb" stroke-width="1"/>
<text x="969.9" y="908.5" text-anchor="middle" font-size="11" letter-spacing="1.3" fill="#666">06/29</text>
<text x="108.5" y="733.5" text-anchor="end" font-size="11" letter-spacing="0.8" fill="#666">75</text>
<text x="108.5" y="787.5" text-anchor="end" font-size="11" letter-spacing="0.8" fill="#666">50</text>
<text x="108.5" y="841.5" text-anchor="end" font-size="11" letter-spacing="0.8" fill="#666">25</text>
<text x="108.5" y="894.5" text-anchor="end" font-size="11" letter-spacing="0.8" fill="#666">0</text>
<text transform="translate(83.5,810) rotate(-90)" text-anchor="middle" font-size="11" letter-spacing="0.9" fill="#666">Precipitation (mm)</text>
<polygon points="132.6,883.9 162.5,879 192.3,874.2 222.2,868 252.0,862.2 281.9,858 311.7,853.5 341.6,849 371.5,844.6 401.3,838.6 431.2,833.7 461.0,827 490.9,820 520.7,816 550.6,811.5 580.5,806.5 610.3,802 640.2,797 670.0,792.5 699.9,788 729.7,783.5 759.6,779.6 789.5,774 819.3,768.8 849.2,764 879.0,758.6 908.9,755 938.7,750.8 968.6,747 998.5,743.5 998.5,754.7 968.6,759.5 938.7,764.2 908.9,769 879.0,774 849.2,778.5 819.3,782 789.5,787 759.6,791 729.7,798.2 699.9,805 670.0,812 640.2,819.5 610.3,827 580.5,835 550.6,837 520.7,839.5 490.9,841.4 461.0,848 431.2,851 401.3,852.5 371.5,855 341.6,857.1 311.7,859.8 281.9,863 252.0,868.7 222.2,872.3 192.3,879.5 162.5,881.5 132.6,883.9" fill="#c69d92"/>
<polyline points="132.6,883.9 162.5,881.5 192.3,879.5 222.2,872.3 252.0,868.7 281.9,863 311.7,859.8 341.6,857.1 371.5,855 401.3,852.5 431.2,851 461.0,848 490.9,841.4 520.7,839.5 550.6,837 580.5,835 610.3,827 640.2,819.5 670.0,812 699.9,805 729.7,798.2 759.6,791 789.5,787 819.3,782 849.2,778.5 879.0,774 908.9,769 938.7,764.2 968.6,759.5 998.5,754.7" fill="none" stroke="#000" stroke-width="2" stroke-linejoin="round" stroke-linecap="round"/>
<polyline points="132.6,883.9 162.5,879 192.3,874.2 222.2,868 252.0,862.2 281.9,858 311.7,853.5 341.6,849 371.5,844.6 401.3,838.6 431.2,833.7 461.0,827 490.9,820 520.7,816 550.6,811.5 580.5,806.5 610.3,802 640.2,797 670.0,792.5 699.9,788 729.7,783.5 759.6,779.6 789.5,774 819.3,768.8 849.2,764 879.0,758.6 908.9,755 938.7,750.8 968.6,747 998.5,743.5" fill="none" stroke="#000" stroke-width="2" stroke-dasharray="8,6" stroke-linejoin="round" stroke-linecap="round"/>
<rect x="142.5" y="737.5" width="108" height="45" fill="#fff" stroke="#999" stroke-width="1"/>
<line x1="151" y1="751" x2="181" y2="751" stroke="#000" stroke-width="2" stroke-dasharray="8,6" stroke-linecap="round"/>
<line x1="150" y1="768.5" x2="182" y2="768.5" stroke="#000" stroke-width="2"/>
<text x="187.5" y="754.7" font-size="12" font-weight="bold" fill="#333">Normal</text>
<text x="187.5" y="772.7" font-size="11.6" font-weight="bold" fill="#333">Observed</text>
<text x="1007.5" y="921.6" text-anchor="end" font-size="9.7" fill="#999">Highcharts.com</text>
</svg>
</body></html>
